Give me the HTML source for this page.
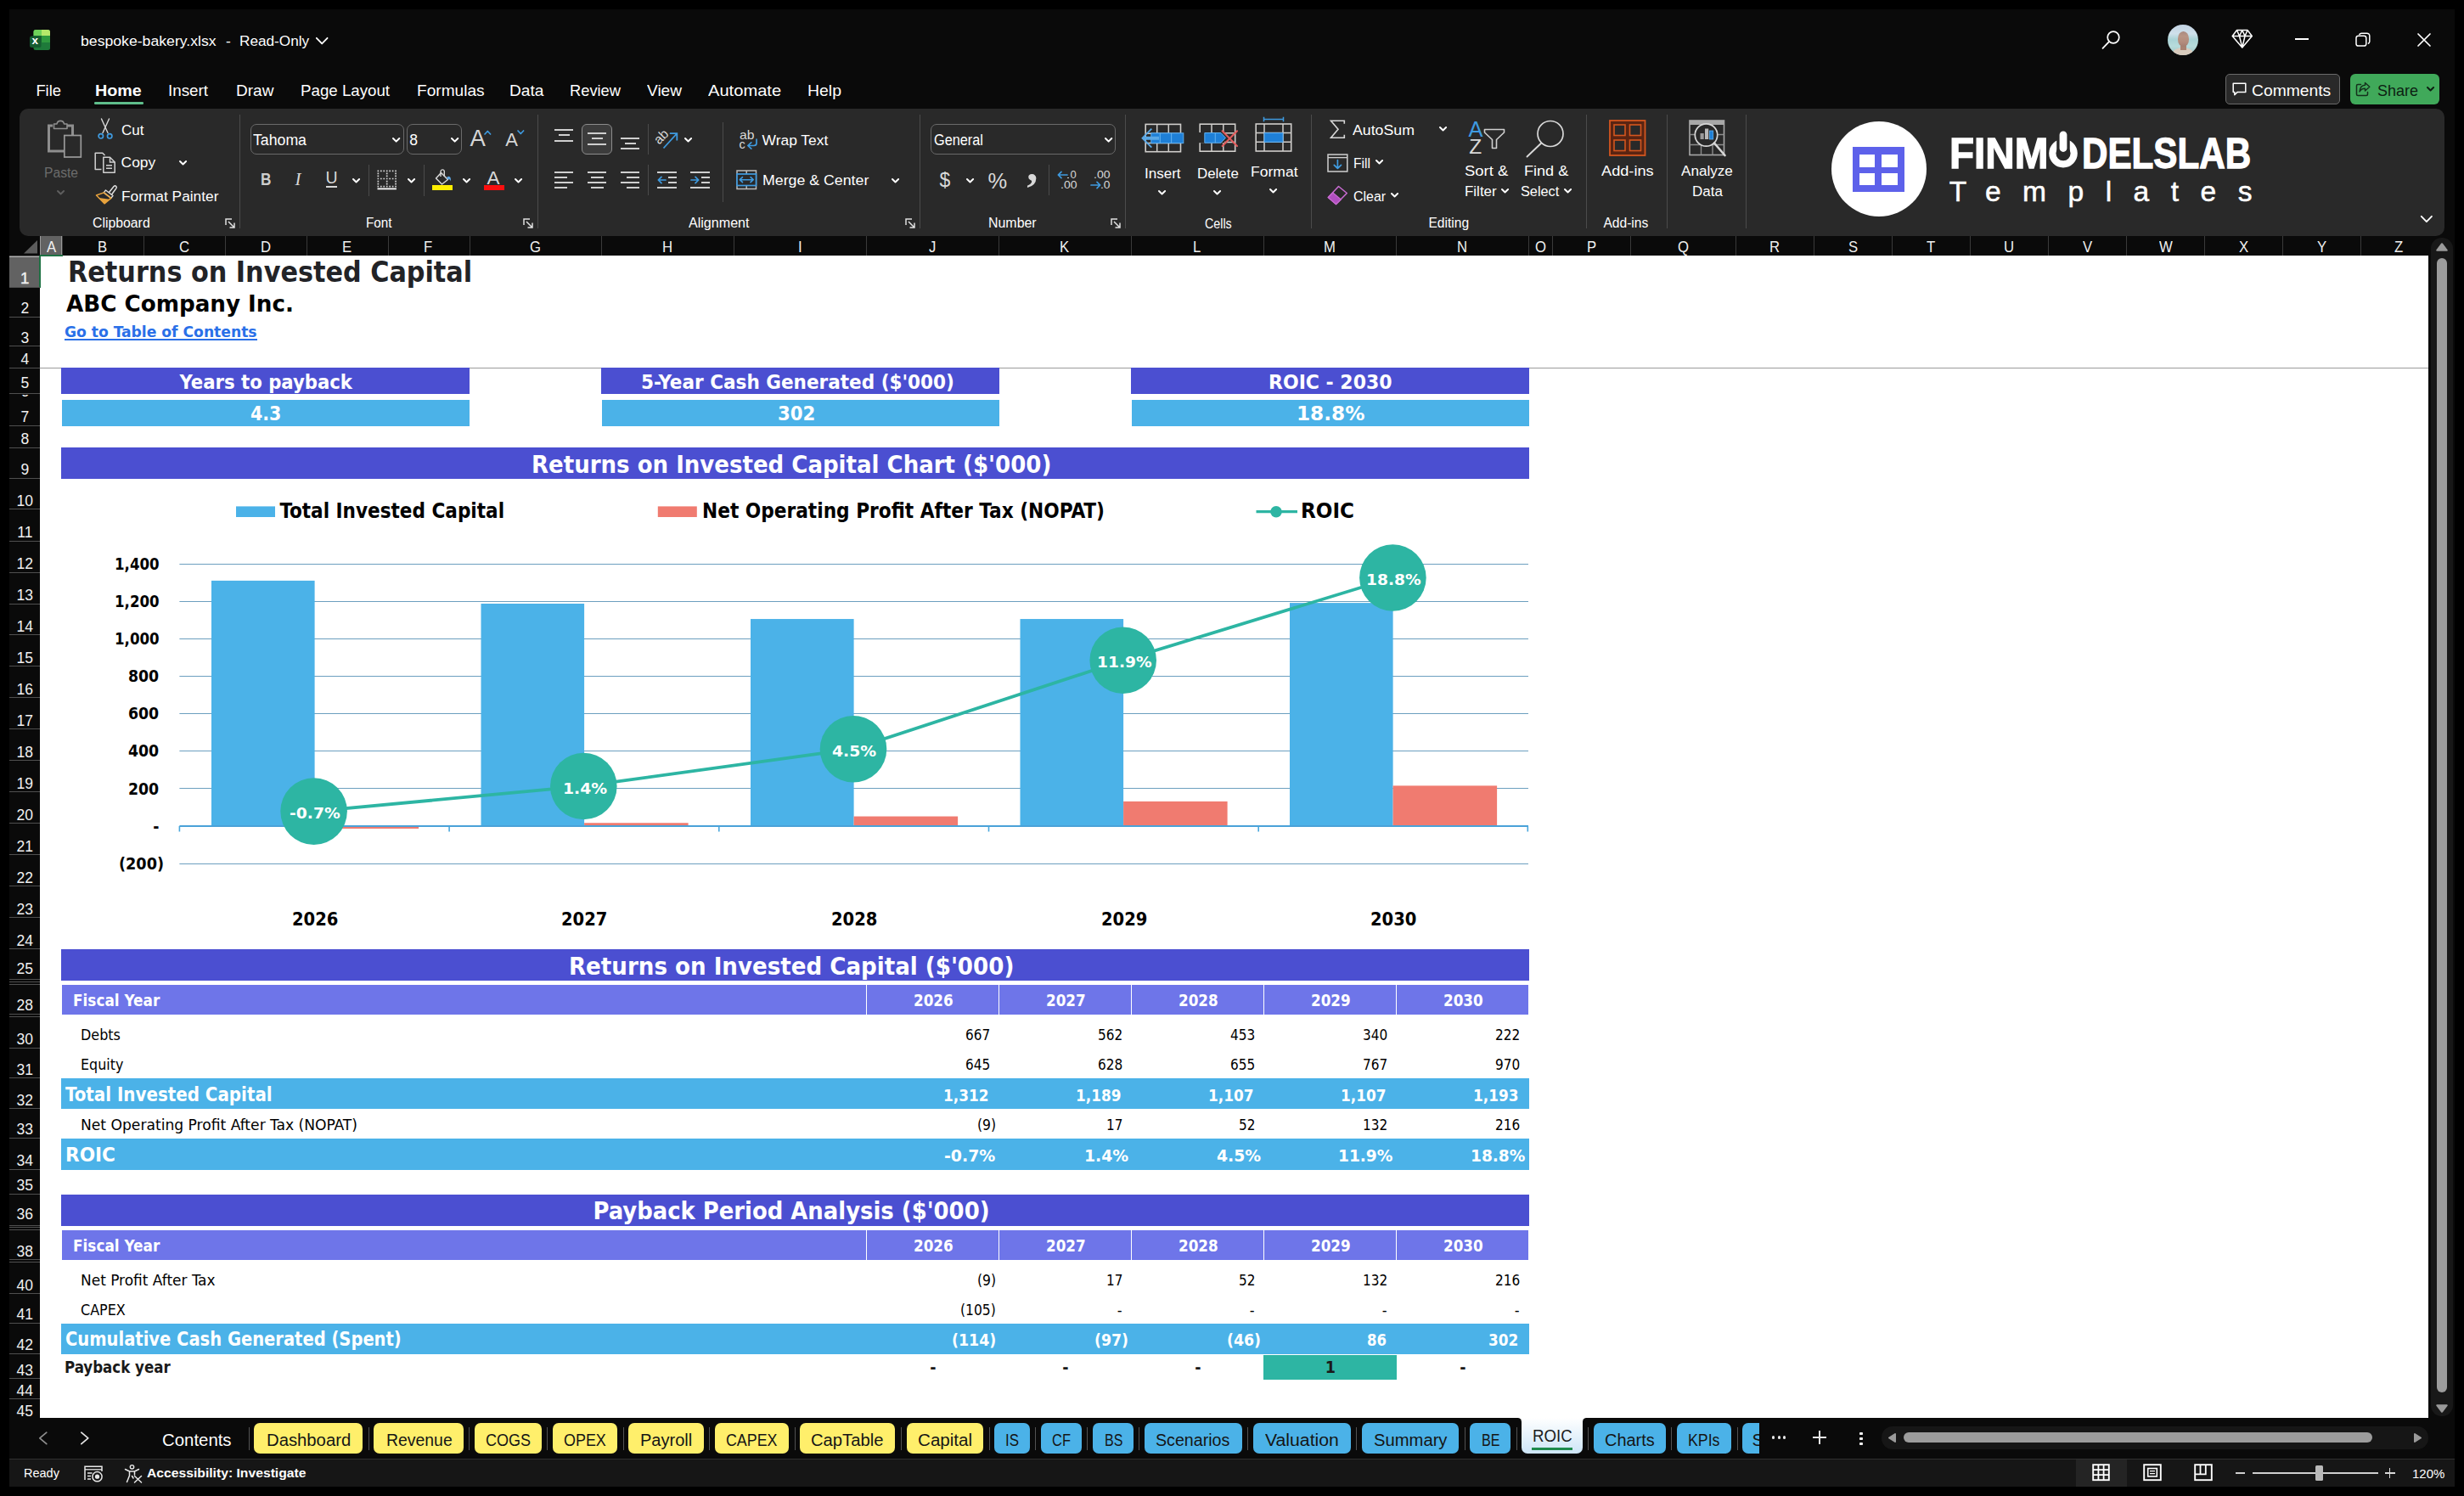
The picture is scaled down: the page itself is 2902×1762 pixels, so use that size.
<!DOCTYPE html>
<html lang="en"><head><meta charset="utf-8"><title>bespoke-bakery.xlsx - Excel</title>
<style>
html,body{margin:0;padding:0}
body{width:2902px;height:1762px;background:#000;position:relative;overflow:hidden;font-family:"Liberation Sans","DejaVu Sans",sans-serif}
#w{position:absolute;left:11px;top:11px;width:2880px;height:1740px;background:#0a0a0a}
div,span,svg{position:absolute}
span{white-space:pre;line-height:1;color:#fff;transform-origin:0 0}
.tu{font-family:"Liberation Sans","DejaVu Sans",sans-serif}
.tt{font-family:"DejaVu Sans Condensed","Liberation Sans",sans-serif}
.ts{font-family:"Liberation Serif","DejaVu Serif",serif}
.b{font-weight:700}
svg{overflow:visible}
</style></head>
<body>
<div id="w"></div>
<svg style="left:34.5px;top:34.5px;" width="24.5" height="24.5" viewBox="0 0 24.5 24.5">
<rect x="4.5" y="0" width="19.5" height="24" rx="2.5" fill="#1e7a3a"/>
<path d="M4.5 2.5A2.5 2.5 0 0 1 7 0H14V7H4.5Z" fill="#6fd15a"/>
<path d="M14 0H21.500A2.500 2.500 0 0 1 24 2.500V7H14Z" fill="#b6e86a"/>
<rect x="14" y="7" width="10" height="8" fill="#2f9a3f"/>
<rect x="4.5" y="7" width="9.5" height="8" fill="#1c6a34"/>
<rect x="0" y="7.600" width="13.500" height="13.500" rx="2.500" fill="#155c30"/>
</svg>
<span class="tu b" style="left:37.6px;top:41px;font-size:13.5px;">x</span>
<span class="tu" style="left:95.4px;top:40px;font-size:17.4px;transform:scaleX(1.015);">bespoke-bakery.xlsx</span>
<span class="tu" style="left:266px;top:40px;font-size:17.4px;">-</span>
<span class="tu" style="left:282.4px;top:40px;font-size:17.4px;transform:scaleX(0.988);">Read-Only</span>
<svg style="left:371.01px;top:43.06px;" width="16.38" height="10.28" viewBox="0 0 16.38 10.28"><path d="M1.8 1.8L8.19 8.48L14.58 1.8" fill="none" stroke="#fff" stroke-width="1.8" stroke-linecap="round" stroke-linejoin="round"/></svg>
<svg style="left:2475px;top:35px;" width="23" height="24" viewBox="0 0 23 24"><circle cx="14" cy="9" r="6.800" fill="none" stroke="#fff" stroke-width="1.700"/><path d="M9.200 13.800L1.500 21.800" stroke="#fff" stroke-width="1.800" stroke-linecap="round"/></svg>
<div style="left:2553px;top:29px;width:36px;height:36px;border-radius:50%;background:linear-gradient(#c3d3e3 0,#cfe0ea 30%,#a9d3d6 48%,#b7dcdc 70%,#9fc4c4 100%);overflow:hidden"><div style="left:6px;top:26.500px;width:24px;height:14px;border-radius:50% 50% 0 0;background:#d8cbbd"></div><div style="left:14.500px;top:22px;width:7px;height:8px;background:#a88372"></div><div style="left:11.500px;top:7.500px;width:13px;height:18px;border-radius:48% 48% 46% 46%;background:linear-gradient(#a98a80 0,#b89585 30%,#b38c7c 70%,#a27e70 100%)"></div></div>
<svg style="left:2628px;top:34px;" width="26" height="24" viewBox="0 0 26 24"><path d="M6.500 1.500H19L24.300 8.500L12.800 22L1.200 8.500Z M1.200 8.500H24.300 M6.500 1.500L9.500 8.500L12.800 22L16 8.500L19 1.500 M9.500 8.500L12.800 1.500L16 8.500" fill="none" stroke="#fff" stroke-width="1.500" stroke-linejoin="round"/></svg>
<div style="left:2703px;top:45.3px;width:15.6px;height:1.8px;background:#fff;"></div>
<svg style="left:2774px;top:38px;" width="18" height="18" viewBox="0 0 18 18"><rect x="1" y="4.200" width="11.800" height="11.800" rx="2.600" fill="none" stroke="#fff" stroke-width="1.500"/><path d="M4.600 3.200A2.600 2.600 0 0 1 7 1.200H13.800A3 3 0 0 1 16.800 4.200V11A2.600 2.600 0 0 1 14.800 13.400" fill="none" stroke="#fff" stroke-width="1.500"/></svg>
<svg style="left:2846px;top:38px;" width="18" height="18" viewBox="0 0 18 18"><path d="M2 2L16 16M16 2L2 16" stroke="#fff" stroke-width="1.700" stroke-linecap="round"/></svg>
<span class="tu" style="left:42.4px;top:98px;font-size:18.4px;">File</span>
<span class="tu b" style="left:111.5px;top:98px;font-size:18.4px;transform:scaleX(1.072);">Home</span>
<span class="tu" style="left:198.4px;top:98px;font-size:18.4px;transform:scaleX(1.022);">Insert</span>
<span class="tu" style="left:277.6px;top:98px;font-size:18.4px;transform:scaleX(1.034);">Draw</span>
<span class="tu" style="left:353.5px;top:98px;font-size:18.4px;transform:scaleX(1.017);">Page Layout</span>
<span class="tu" style="left:491.4px;top:98px;font-size:18.4px;transform:scaleX(1.038);">Formulas</span>
<span class="tu" style="left:600px;top:98px;font-size:18.4px;transform:scaleX(1.040);">Data</span>
<span class="tu" style="left:671px;top:98px;font-size:18.4px;transform:scaleX(0.995);">Review</span>
<span class="tu" style="left:762px;top:98px;font-size:18.4px;transform:scaleX(1.037);">View</span>
<span class="tu" style="left:834.4px;top:98px;font-size:18.4px;transform:scaleX(1.094);">Automate</span>
<span class="tu" style="left:951px;top:98px;font-size:18.4px;transform:scaleX(1.057);">Help</span>
<div style="left:111px;top:120px;width:57.7px;height:2.6px;background:#5ebd8a;border-radius:1.300px;"></div>
<div style="left:2621px;top:87.3px;width:134.6px;height:35.8px;background:#292929;border:1px solid #6a6a6a;border-radius:5px;box-sizing:border-box;"></div>
<svg style="left:2629px;top:96.5px;" width="17" height="17" viewBox="0 0 17 17"><path d="M1.200 1.200H15.800V11.400H6.200L2.800 14.800V11.400H1.200Z" fill="none" stroke="#fff" stroke-width="1.500" stroke-linejoin="round"/></svg>
<span class="tu" style="left:2652.4px;top:98px;font-size:18.4px;transform:scaleX(1.049);">Comments</span>
<div style="left:2768px;top:87.3px;width:105px;height:35.8px;background:#40a95a;border-radius:6px;"></div>
<svg style="left:2774px;top:96px;" width="18" height="18" viewBox="0 0 18 18"><path d="M6.500 3.500H3A1.500 1.500 0 0 0 1.500 5V15A1.500 1.500 0 0 0 3 16.500H13A1.500 1.500 0 0 0 14.500 15V12.500" fill="none" stroke="#14301c" stroke-width="1.500" stroke-linecap="round"/><path d="M11.500 1.500L16.800 6.300L11.500 11V8.200C8 8.200 6.200 9.600 5 12C5.300 7.600 7.600 4.600 11.500 4.300Z" fill="none" stroke="#14301c" stroke-width="1.400" stroke-linejoin="round"/></svg>
<span class="tu" style="left:2799.7px;top:98px;font-size:18.4px;color:#0d1f12;transform:scaleX(0.978);">Share</span>
<svg style="left:2857.05px;top:100.75px;" width="11.1" height="7.5" viewBox="0 0 11.1 7.5"><path d="M2 2L5.55 5.5L9.1 2" fill="none" stroke="#0d1f12" stroke-width="2" stroke-linecap="round" stroke-linejoin="round"/></svg>
<div style="left:47px;top:278px;width:25.6px;height:21.5px;background:#626262;"></div>
<span class="tu" style="left:54.52px;top:281px;font-size:19px;color:#f0f0f0;transform:scaleX(0.880);">A</span>
<div style="left:72.5px;top:278px;width:1px;height:23px;background:#3a3a3a;"></div>
<span class="tu" style="left:115.02px;top:281px;font-size:19px;color:#f0f0f0;transform:scaleX(0.880);">B</span>
<div style="left:168.5px;top:278px;width:1px;height:23px;background:#3a3a3a;"></div>
<span class="tu" style="left:210.56px;top:281px;font-size:19px;color:#f0f0f0;transform:scaleX(0.880);">C</span>
<div style="left:264.5px;top:278px;width:1px;height:23px;background:#3a3a3a;"></div>
<span class="tu" style="left:306.56px;top:281px;font-size:19px;color:#f0f0f0;transform:scaleX(0.880);">D</span>
<div style="left:360.5px;top:278px;width:1px;height:23px;background:#3a3a3a;"></div>
<span class="tu" style="left:403.02px;top:281px;font-size:19px;color:#f0f0f0;transform:scaleX(0.880);">E</span>
<div style="left:456.5px;top:278px;width:1px;height:23px;background:#3a3a3a;"></div>
<span class="tu" style="left:499.49px;top:281px;font-size:19px;color:#f0f0f0;transform:scaleX(0.880);">F</span>
<div style="left:552.5px;top:278px;width:1px;height:23px;background:#3a3a3a;"></div>
<span class="tu" style="left:623.8px;top:281px;font-size:19px;color:#f0f0f0;transform:scaleX(0.880);">G</span>
<div style="left:707.5px;top:278px;width:1px;height:23px;background:#3a3a3a;"></div>
<span class="tu" style="left:779.96px;top:281px;font-size:19px;color:#f0f0f0;transform:scaleX(0.880);">H</span>
<div style="left:863.5px;top:278px;width:1px;height:23px;background:#3a3a3a;"></div>
<span class="tu" style="left:939.68px;top:281px;font-size:19px;color:#f0f0f0;transform:scaleX(0.880);">I</span>
<div style="left:1019.5px;top:278px;width:1px;height:23px;background:#3a3a3a;"></div>
<span class="tu" style="left:1093.82px;top:281px;font-size:19px;color:#f0f0f0;transform:scaleX(0.880);">J</span>
<div style="left:1175.5px;top:278px;width:1px;height:23px;background:#3a3a3a;"></div>
<span class="tu" style="left:1248.42px;top:281px;font-size:19px;color:#f0f0f0;transform:scaleX(0.880);">K</span>
<div style="left:1331.5px;top:278px;width:1px;height:23px;background:#3a3a3a;"></div>
<span class="tu" style="left:1405.35px;top:281px;font-size:19px;color:#f0f0f0;transform:scaleX(0.880);">L</span>
<div style="left:1487.5px;top:278px;width:1px;height:23px;background:#3a3a3a;"></div>
<span class="tu" style="left:1559.04px;top:281px;font-size:19px;color:#f0f0f0;transform:scaleX(0.880);">M</span>
<div style="left:1643.5px;top:278px;width:1px;height:23px;background:#3a3a3a;"></div>
<span class="tu" style="left:1715.96px;top:281px;font-size:19px;color:#f0f0f0;transform:scaleX(0.880);">N</span>
<div style="left:1799.5px;top:278px;width:1px;height:23px;background:#3a3a3a;"></div>
<span class="tu" style="left:1807.75px;top:281px;font-size:19px;color:#f0f0f0;transform:scaleX(0.880);">O</span>
<div style="left:1827.5px;top:278px;width:1px;height:23px;background:#3a3a3a;"></div>
<span class="tu" style="left:1868.92px;top:281px;font-size:19px;color:#f0f0f0;transform:scaleX(0.880);">P</span>
<div style="left:1919.5px;top:278px;width:1px;height:23px;background:#3a3a3a;"></div>
<span class="tu" style="left:1976px;top:281px;font-size:19px;color:#f0f0f0;transform:scaleX(0.880);">Q</span>
<div style="left:2043.5px;top:278px;width:1px;height:23px;background:#3a3a3a;"></div>
<span class="tu" style="left:2084.46px;top:281px;font-size:19px;color:#f0f0f0;transform:scaleX(0.880);">R</span>
<div style="left:2135.5px;top:278px;width:1px;height:23px;background:#3a3a3a;"></div>
<span class="tu" style="left:2176.92px;top:281px;font-size:19px;color:#f0f0f0;transform:scaleX(0.880);">S</span>
<div style="left:2227.5px;top:278px;width:1px;height:23px;background:#3a3a3a;"></div>
<span class="tu" style="left:2269.39px;top:281px;font-size:19px;color:#f0f0f0;transform:scaleX(0.880);">T</span>
<div style="left:2319.5px;top:278px;width:1px;height:23px;background:#3a3a3a;"></div>
<span class="tu" style="left:2360.46px;top:281px;font-size:19px;color:#f0f0f0;transform:scaleX(0.880);">U</span>
<div style="left:2411.5px;top:278px;width:1px;height:23px;background:#3a3a3a;"></div>
<span class="tu" style="left:2452.92px;top:281px;font-size:19px;color:#f0f0f0;transform:scaleX(0.880);">V</span>
<div style="left:2503.5px;top:278px;width:1px;height:23px;background:#3a3a3a;"></div>
<span class="tu" style="left:2542.61px;top:281px;font-size:19px;color:#f0f0f0;transform:scaleX(0.880);">W</span>
<div style="left:2595.5px;top:278px;width:1px;height:23px;background:#3a3a3a;"></div>
<span class="tu" style="left:2636.92px;top:281px;font-size:19px;color:#f0f0f0;transform:scaleX(0.880);">X</span>
<div style="left:2687.5px;top:278px;width:1px;height:23px;background:#3a3a3a;"></div>
<span class="tu" style="left:2728.92px;top:281px;font-size:19px;color:#f0f0f0;transform:scaleX(0.880);">Y</span>
<div style="left:2779.5px;top:278px;width:1px;height:23px;background:#3a3a3a;"></div>
<span class="tu" style="left:2819.89px;top:281px;font-size:19px;color:#f0f0f0;transform:scaleX(0.880);">Z</span>
<svg style="left:28px;top:283px;" width="16" height="15.5" viewBox="0 0 16 15.5"><path d="M16 0V15.500H0Z" fill="#5c5c5c"/></svg>
<div style="left:47px;top:301px;width:2813.3px;height:1369.2px;background:#fff;"></div>
<div style="left:47px;top:300px;width:27px;height:2px;background:#1f7244;"></div>
<div style="left:47px;top:278px;width:1px;height:22px;background:#9a9a9a;"></div>
<div style="left:72px;top:278px;width:1px;height:22px;background:#9a9a9a;"></div>
<div style="left:11px;top:301px;width:36px;height:37.5px;background:#626262;"></div>
<div style="left:46px;top:301px;width:2px;height:38px;background:#1f7244;"></div>
<div style="left:11px;top:301.5px;width:35px;height:1px;background:#b4b4b4;"></div>
<div style="left:11px;top:338px;width:35px;height:1px;background:#b4b4b4;"></div>
<span class="tu rh" style="left:24.07px;top:319px;font-size:18.8px;color:#f0f0f0;-webkit-text-stroke:0.400px #f0f0f0;">1</span>
<div style="left:11px;top:338px;width:36px;height:1px;background:#4f4f4f;"></div>
<span class="tu rh" style="left:24.43px;top:355px;font-size:17.5px;color:#f0f0f0;">2</span>
<div style="left:11px;top:373px;width:36px;height:1px;background:#4f4f4f;"></div>
<span class="tu rh" style="left:24.43px;top:390px;font-size:17.5px;color:#f0f0f0;">3</span>
<div style="left:11px;top:407px;width:36px;height:1px;background:#4f4f4f;"></div>
<span class="tu rh" style="left:24.43px;top:415px;font-size:17.5px;color:#f0f0f0;">4</span>
<div style="left:11px;top:433px;width:36px;height:1px;background:#4f4f4f;"></div>
<span class="tu rh" style="left:24.43px;top:443px;font-size:17.5px;color:#f0f0f0;">5</span>
<div style="left:11px;top:463px;width:36px;height:1px;background:#4f4f4f;"></div>
<span class="tu rh" style="left:24.43px;top:483px;font-size:17.5px;color:#f0f0f0;">7</span>
<div style="left:11px;top:501px;width:36px;height:1px;background:#4f4f4f;"></div>
<span class="tu rh" style="left:24.43px;top:509px;font-size:17.5px;color:#f0f0f0;">8</span>
<div style="left:11px;top:527px;width:36px;height:1px;background:#4f4f4f;"></div>
<span class="tu rh" style="left:24.43px;top:545px;font-size:17.5px;color:#f0f0f0;">9</span>
<div style="left:11px;top:563px;width:36px;height:1px;background:#4f4f4f;"></div>
<span class="tu rh" style="left:19.57px;top:582px;font-size:17.5px;color:#f0f0f0;">10</span>
<div style="left:11px;top:599px;width:36px;height:1px;background:#4f4f4f;"></div>
<span class="tu rh" style="left:20.21px;top:619px;font-size:17.5px;color:#f0f0f0;">11</span>
<div style="left:11px;top:637px;width:36px;height:1px;background:#4f4f4f;"></div>
<span class="tu rh" style="left:19.57px;top:656px;font-size:17.5px;color:#f0f0f0;">12</span>
<div style="left:11px;top:674px;width:36px;height:1px;background:#4f4f4f;"></div>
<span class="tu rh" style="left:19.57px;top:693px;font-size:17.5px;color:#f0f0f0;">13</span>
<div style="left:11px;top:711px;width:36px;height:1px;background:#4f4f4f;"></div>
<span class="tu rh" style="left:19.57px;top:730px;font-size:17.5px;color:#f0f0f0;">14</span>
<div style="left:11px;top:747px;width:36px;height:1px;background:#4f4f4f;"></div>
<span class="tu rh" style="left:19.57px;top:767px;font-size:17.5px;color:#f0f0f0;">15</span>
<div style="left:11px;top:784px;width:36px;height:1px;background:#4f4f4f;"></div>
<span class="tu rh" style="left:19.57px;top:804px;font-size:17.5px;color:#f0f0f0;">16</span>
<div style="left:11px;top:821px;width:36px;height:1px;background:#4f4f4f;"></div>
<span class="tu rh" style="left:19.57px;top:841px;font-size:17.5px;color:#f0f0f0;">17</span>
<div style="left:11px;top:858px;width:36px;height:1px;background:#4f4f4f;"></div>
<span class="tu rh" style="left:19.57px;top:878px;font-size:17.5px;color:#f0f0f0;">18</span>
<div style="left:11px;top:895px;width:36px;height:1px;background:#4f4f4f;"></div>
<span class="tu rh" style="left:19.57px;top:915px;font-size:17.5px;color:#f0f0f0;">19</span>
<div style="left:11px;top:932px;width:36px;height:1px;background:#4f4f4f;"></div>
<span class="tu rh" style="left:19.57px;top:952px;font-size:17.5px;color:#f0f0f0;">20</span>
<div style="left:11px;top:969px;width:36px;height:1px;background:#4f4f4f;"></div>
<span class="tu rh" style="left:19.57px;top:989px;font-size:17.5px;color:#f0f0f0;">21</span>
<div style="left:11px;top:1006px;width:36px;height:1px;background:#4f4f4f;"></div>
<span class="tu rh" style="left:19.57px;top:1026px;font-size:17.5px;color:#f0f0f0;">22</span>
<div style="left:11px;top:1043px;width:36px;height:1px;background:#4f4f4f;"></div>
<span class="tu rh" style="left:19.57px;top:1063px;font-size:17.5px;color:#f0f0f0;">23</span>
<div style="left:11px;top:1080px;width:36px;height:1px;background:#4f4f4f;"></div>
<span class="tu rh" style="left:19.57px;top:1100px;font-size:17.5px;color:#f0f0f0;">24</span>
<div style="left:11px;top:1117px;width:36px;height:1px;background:#4f4f4f;"></div>
<span class="tu rh" style="left:19.57px;top:1133px;font-size:17.5px;color:#f0f0f0;">25</span>
<div style="left:11px;top:1153px;width:36px;height:1px;background:#4f4f4f;"></div>
<span class="tu rh" style="left:19.57px;top:1176px;font-size:17.5px;color:#f0f0f0;">28</span>
<div style="left:11px;top:1194px;width:36px;height:1px;background:#4f4f4f;"></div>
<span class="tu rh" style="left:19.57px;top:1216px;font-size:17.5px;color:#f0f0f0;">30</span>
<div style="left:11px;top:1234px;width:36px;height:1px;background:#4f4f4f;"></div>
<span class="tu rh" style="left:19.57px;top:1252px;font-size:17.5px;color:#f0f0f0;">31</span>
<div style="left:11px;top:1269px;width:36px;height:1px;background:#4f4f4f;"></div>
<span class="tu rh" style="left:19.57px;top:1288px;font-size:17.5px;color:#f0f0f0;">32</span>
<div style="left:11px;top:1305px;width:36px;height:1px;background:#4f4f4f;"></div>
<span class="tu rh" style="left:19.57px;top:1322px;font-size:17.5px;color:#f0f0f0;">33</span>
<div style="left:11px;top:1340px;width:36px;height:1px;background:#4f4f4f;"></div>
<span class="tu rh" style="left:19.57px;top:1359px;font-size:17.5px;color:#f0f0f0;">34</span>
<div style="left:11px;top:1377px;width:36px;height:1px;background:#4f4f4f;"></div>
<span class="tu rh" style="left:19.57px;top:1388px;font-size:17.5px;color:#f0f0f0;">35</span>
<div style="left:11px;top:1406px;width:36px;height:1px;background:#4f4f4f;"></div>
<span class="tu rh" style="left:19.57px;top:1422px;font-size:17.5px;color:#f0f0f0;">36</span>
<div style="left:11px;top:1443px;width:36px;height:1px;background:#4f4f4f;"></div>
<span class="tu rh" style="left:19.57px;top:1466px;font-size:17.5px;color:#f0f0f0;">38</span>
<div style="left:11px;top:1483px;width:36px;height:1px;background:#4f4f4f;"></div>
<span class="tu rh" style="left:19.57px;top:1506px;font-size:17.5px;color:#f0f0f0;">40</span>
<div style="left:11px;top:1523px;width:36px;height:1px;background:#4f4f4f;"></div>
<span class="tu rh" style="left:19.57px;top:1540px;font-size:17.5px;color:#f0f0f0;">41</span>
<div style="left:11px;top:1558px;width:36px;height:1px;background:#4f4f4f;"></div>
<span class="tu rh" style="left:19.57px;top:1576px;font-size:17.5px;color:#f0f0f0;">42</span>
<div style="left:11px;top:1594px;width:36px;height:1px;background:#4f4f4f;"></div>
<span class="tu rh" style="left:19.57px;top:1606px;font-size:17.5px;color:#f0f0f0;">43</span>
<div style="left:11px;top:1623px;width:36px;height:1px;background:#4f4f4f;"></div>
<span class="tu rh" style="left:19.57px;top:1630px;font-size:17.5px;color:#f0f0f0;">44</span>
<div style="left:11px;top:1647px;width:36px;height:1px;background:#4f4f4f;"></div>
<span class="tu rh" style="left:19.57px;top:1654px;font-size:17.5px;color:#f0f0f0;">45</span>
<div style="left:13px;top:464.500px;width:34px;height:4px;overflow:hidden"><span class="tu" style="left:11.400px;top:-11.500px;font-size:17.500px;color:#f0f0f0">6</span></div>
<div style="left:11px;top:463px;width:36px;height:1px;background:#4f4f4f;"></div>
<div style="left:11px;top:1156px;width:36px;height:1px;background:#4f4f4f;"></div>
<div style="left:11px;top:1159px;width:36px;height:1px;background:#4f4f4f;"></div>
<div style="left:11px;top:1197px;width:36px;height:1px;background:#4f4f4f;"></div>
<div style="left:11px;top:1445px;width:36px;height:1px;background:#4f4f4f;"></div>
<div style="left:11px;top:1448px;width:36px;height:1px;background:#4f4f4f;"></div>
<div style="left:11px;top:1486px;width:36px;height:1px;background:#4f4f4f;"></div>
<div style="left:11px;top:1670.2px;width:2880px;height:80.8px;background:#0a0a0a;"></div>
<div style="left:2860.3px;top:278px;width:30.7px;height:1392.2px;background:#0a0a0a;"></div>
<div style="left:2863px;top:279.5px;width:25.5px;height:1388px;background:#181818;border-radius:12.700px;"></div>
<svg style="left:2869.1px;top:286px;" width="14" height="10" viewBox="0 0 14 10"><path d="M7 1.200L12.800 8.800H1.200Z" fill="#9a9a9a" stroke="#9a9a9a" stroke-linejoin="round" stroke-width="2"/></svg>
<div style="left:2870px;top:304px;width:11.5px;height:1336px;background:#9c9c9c;border-radius:6px;"></div>
<svg style="left:2869.1px;top:1654.2px;" width="14" height="10" viewBox="0 0 14 10"><path d="M7 8.800L12.800 1.200H1.200Z" fill="#9a9a9a" stroke="#9a9a9a" stroke-linejoin="round" stroke-width="2"/></svg>
<div style="left:23px;top:128px;width:2856px;height:150px;background:#292929;border-radius:10px;"></div>
<div style="left:281.9px;top:134.7px;width:1.2px;height:134px;background:#4b4b4b;"></div>
<div style="left:632.9px;top:134.7px;width:1.2px;height:134px;background:#4b4b4b;"></div>
<div style="left:1083px;top:134.7px;width:1.2px;height:134px;background:#4b4b4b;"></div>
<div style="left:1324.9px;top:134.7px;width:1.2px;height:134px;background:#4b4b4b;"></div>
<div style="left:1543.6px;top:134.7px;width:1.2px;height:134px;background:#4b4b4b;"></div>
<div style="left:1867.8px;top:134.7px;width:1.2px;height:134px;background:#4b4b4b;"></div>
<div style="left:1962.7px;top:134.7px;width:1.2px;height:134px;background:#4b4b4b;"></div>
<div style="left:2055.7px;top:134.7px;width:1.2px;height:134px;background:#4b4b4b;"></div>
<svg style="left:54px;top:140px;" width="44" height="48" viewBox="0 0 44 48">
<path d="M8 8H3.500V38H21" fill="none" stroke="#8e8e8e" stroke-width="3"/>
<path d="M25 8H31.500V19" fill="none" stroke="#8e8e8e" stroke-width="3"/>
<path d="M9.500 11.500V6H13A4.300 4.300 0 0 1 21.500 6H25V11.500Z" fill="#292929" stroke="#8e8e8e" stroke-width="1.600" stroke-linejoin="round"/>
<rect x="21.800" y="19.500" width="19.500" height="25.500" fill="#292929" stroke="#9a9a9a" stroke-width="1.700"/>
</svg>
<span class="tu" style="left:52px;top:195px;font-size:17.3px;color:#6c6c6c;transform:scaleX(0.905);">Paste</span>
<svg style="left:65.95px;top:222.75px;" width="11.1" height="7.5" viewBox="0 0 11.1 7.5"><path d="M2 2L5.55 5.5L9.1 2" fill="none" stroke="#5e5e5e" stroke-width="2" stroke-linecap="round" stroke-linejoin="round"/></svg>
<svg style="left:114px;top:139px;" width="20" height="27" viewBox="0 0 20 27">
<path d="M5.500 1L13 17.500M14.500 1L7 17.500" stroke="#d8d8d8" stroke-width="1.400" stroke-linecap="round" fill="none"/>
<circle cx="4.800" cy="21.300" r="2.700" fill="none" stroke="#3f9be0" stroke-width="1.700"/>
<circle cx="15.200" cy="21.300" r="2.700" fill="none" stroke="#3f9be0" stroke-width="1.700"/>
</svg>
<span class="tu" style="left:142.6px;top:145px;font-size:17.4px;transform:scaleX(0.976);">Cut</span>
<svg style="left:111px;top:178.5px;" width="26" height="26" viewBox="0 0 26 26">
<path d="M8.500 20.500H1.200V1.200H9.800L12.500 4" fill="none" stroke="#d0d0d0" stroke-width="1.500" stroke-linejoin="round"/>
<path d="M10.800 6.200H18.500L24.200 12V24.200H10.800Z" fill="none" stroke="#d0d0d0" stroke-width="1.500" stroke-linejoin="round"/>
<path d="M18.500 6.200V12H24.200" fill="none" stroke="#d0d0d0" stroke-width="1.400"/>
<path d="M14 15.800H21M14 19.300H21" stroke="#d0d0d0" stroke-width="1.400"/>
</svg>
<span class="tu" style="left:142.6px;top:183px;font-size:17.4px;">Copy</span>
<svg style="left:209.75px;top:187.85px;" width="11.1" height="7.5" viewBox="0 0 11.1 7.5"><path d="M2 2L5.55 5.5L9.1 2" fill="none" stroke="#fff" stroke-width="2" stroke-linecap="round" stroke-linejoin="round"/></svg>
<svg style="left:111.5px;top:217px;" width="26" height="25" viewBox="0 0 26 25">
<path d="M16.500 9.500L22.300 2.300A1.800 1.800 0 0 1 25 4.600L19.600 12" fill="none" stroke="#e0e0e0" stroke-width="1.500" stroke-linejoin="round"/>
<path d="M12.500 7L21 13.500L18.800 16.400L10.300 9.900Z" fill="none" stroke="#e0e0e0" stroke-width="1.400" stroke-linejoin="round"/>
<path d="M10.300 9.900L1.500 13L11 22.800L18.800 16.400Z" fill="none" stroke="#e8a33d" stroke-width="1.500" stroke-linejoin="round"/>
<path d="M4.500 16L11 22.800L17 17.800Z" fill="#e8a33d"/>
</svg>
<span class="tu" style="left:142.9px;top:223px;font-size:17.4px;transform:scaleX(0.995);">Format Painter</span>
<span class="tu" style="left:109.3px;top:255px;font-size:15.6px;transform:scaleX(1.014);">Clipboard</span>
<svg style="left:265px;top:257.3px;" width="12" height="12" viewBox="0 0 12 12"><path d="M1 8V1H8" fill="none" stroke="#e0e0e0" stroke-width="1.500"/><path d="M4 4L10.500 10.500M5.500 11H11V5.500" fill="none" stroke="#e0e0e0" stroke-width="1.500"/></svg>
<div style="left:295px;top:146px;width:180.6px;height:35.8px;border:1.300px solid #6a6a6a;border-radius:7px;box-sizing:border-box;"></div>
<span class="tu" style="left:298.4px;top:157px;font-size:17.6px;transform:scaleX(1.006);">Tahoma</span>
<svg style="left:461.45px;top:160.8px;" width="11.3" height="7.6" viewBox="0 0 11.3 7.6"><path d="M2 2L5.65 5.6L9.3 2" fill="none" stroke="#fff" stroke-width="2" stroke-linecap="round" stroke-linejoin="round"/></svg>
<div style="left:479.4px;top:146px;width:64.4px;height:35.8px;border:1.300px solid #6a6a6a;border-radius:7px;box-sizing:border-box;"></div>
<span class="tu" style="left:482.3px;top:157px;font-size:17.6px;">8</span>
<svg style="left:529.55px;top:160.8px;" width="11.3" height="7.6" viewBox="0 0 11.3 7.6"><path d="M2 2L5.65 5.6L9.3 2" fill="none" stroke="#fff" stroke-width="2" stroke-linecap="round" stroke-linejoin="round"/></svg>
<span class="tu" style="left:553.5px;top:149px;font-size:27.5px;color:#d6d6d6;">A</span>
<svg style="left:570px;top:152.5px;" width="9" height="6" viewBox="0 0 9 6"><path d="M1 5L4.300 1.500L7.600 5" fill="none" stroke="#3f9be0" stroke-width="1.700" stroke-linecap="round" stroke-linejoin="round"/></svg>
<span class="tu" style="left:595.2px;top:154px;font-size:22px;color:#d6d6d6;">A</span>
<svg style="left:608.5px;top:153px;" width="9" height="6" viewBox="0 0 9 6"><path d="M1 1L4.300 4.500L7.600 1" fill="none" stroke="#3f9be0" stroke-width="1.700" stroke-linecap="round" stroke-linejoin="round"/></svg>
<span class="tu b" style="left:307px;top:201px;font-size:20.5px;color:#cdcdcd;transform:scaleX(0.840);">B</span>
<span class="ts" style="left:347.5px;top:201px;font-size:21px;color:#d8d8d8;font-style:italic;">I</span>
<span class="tu" style="left:383.4px;top:200px;font-size:19.5px;color:#d8d8d8;">U</span>
<div style="left:383.6px;top:219.2px;width:13.2px;height:1.5px;background:#d8d8d8;"></div>
<svg style="left:413.65px;top:208.85px;" width="11.1" height="7.5" viewBox="0 0 11.1 7.5"><path d="M2 2L5.55 5.5L9.1 2" fill="none" stroke="#fff" stroke-width="2" stroke-linecap="round" stroke-linejoin="round"/></svg>
<div style="left:433.6px;top:194px;width:1.2px;height:36.5px;background:#4b4b4b;"></div>
<svg style="left:444px;top:199.5px;" width="24" height="24" viewBox="0 0 24 24"><path d="M0.5 0.5h1.700v1.700h-1.700zM0.5 3.55h1.700v1.700h-1.700zM0.5 6.6h1.700v1.700h-1.700zM0.5 9.65h1.700v1.700h-1.700zM0.5 12.7h1.700v1.700h-1.700zM0.5 15.75h1.700v1.700h-1.700zM0.5 18.8h1.700v1.700h-1.700zM3.95 0.5h1.700v1.700h-1.700zM3.95 9.65h1.700v1.700h-1.700zM3.95 18.8h1.700v1.700h-1.700zM7.4 0.5h1.700v1.700h-1.700zM7.4 9.65h1.700v1.700h-1.700zM7.4 18.8h1.700v1.700h-1.700zM10.85 0.5h1.700v1.700h-1.700zM10.85 3.55h1.700v1.700h-1.700zM10.85 6.6h1.700v1.700h-1.700zM10.85 9.65h1.700v1.700h-1.700zM10.85 12.7h1.700v1.700h-1.700zM10.85 15.75h1.700v1.700h-1.700zM10.85 18.8h1.700v1.700h-1.700zM14.3 0.5h1.700v1.700h-1.700zM14.3 9.65h1.700v1.700h-1.700zM14.3 18.8h1.700v1.700h-1.700zM17.75 0.5h1.700v1.700h-1.700zM17.75 9.65h1.700v1.700h-1.700zM17.75 18.8h1.700v1.700h-1.700zM21.2 0.5h1.700v1.700h-1.700zM21.2 3.55h1.700v1.700h-1.700zM21.2 6.6h1.700v1.700h-1.700zM21.2 9.65h1.700v1.700h-1.700zM21.2 12.7h1.700v1.700h-1.700zM21.2 15.75h1.700v1.700h-1.700zM21.2 18.8h1.700v1.700h-1.700z" fill="#d4d4d4"/><path d="M0.500 22.400H22.900" stroke="#ffffff" stroke-width="1.800"/></svg>
<svg style="left:478.95px;top:208.85px;" width="11.1" height="7.5" viewBox="0 0 11.1 7.5"><path d="M2 2L5.55 5.5L9.1 2" fill="none" stroke="#fff" stroke-width="2" stroke-linecap="round" stroke-linejoin="round"/></svg>
<div style="left:498.9px;top:194px;width:1.2px;height:36.5px;background:#4b4b4b;"></div>
<svg style="left:511px;top:199px;" width="22" height="20" viewBox="0 0 22 20">
<path d="M8.500 4.500L16.500 12.500L9.500 18L2.500 11Z" fill="none" stroke="#d8d8d8" stroke-width="1.500" stroke-linejoin="round"/>
<path d="M8 9V2.800A2.200 2.200 0 0 1 12.300 2.500V8.500" fill="none" stroke="#d8d8d8" stroke-width="1.400"/>
<path d="M15.500 9.500C18.500 7.500 20.500 9.500 19.800 14.500C18.700 12 17.500 11.500 15.500 12.500Z" fill="#5fa8e6"/>
</svg>
<div style="left:509px;top:217.9px;width:24px;height:6.2px;background:#ffee00;"></div>
<svg style="left:543.95px;top:208.85px;" width="11.1" height="7.5" viewBox="0 0 11.1 7.5"><path d="M2 2L5.55 5.5L9.1 2" fill="none" stroke="#fff" stroke-width="2" stroke-linecap="round" stroke-linejoin="round"/></svg>
<span class="tu" style="left:573.6px;top:199px;font-size:22.5px;color:#d8d8d8;">A</span>
<div style="left:569.8px;top:217.9px;width:24.2px;height:6.2px;background:#fa0f0f;"></div>
<svg style="left:604.95px;top:208.85px;" width="11.1" height="7.5" viewBox="0 0 11.1 7.5"><path d="M2 2L5.55 5.5L9.1 2" fill="none" stroke="#fff" stroke-width="2" stroke-linecap="round" stroke-linejoin="round"/></svg>
<span class="tu" style="left:430.5px;top:255px;font-size:15.6px;transform:scaleX(0.977);">Font</span>
<svg style="left:616px;top:257.3px;" width="12" height="12" viewBox="0 0 12 12"><path d="M1 8V1H8" fill="none" stroke="#e0e0e0" stroke-width="1.500"/><path d="M4 4L10.500 10.500M5.500 11H11V5.500" fill="none" stroke="#e0e0e0" stroke-width="1.500"/></svg>
<div style="left:653px;top:152px;width:22px;height:1.5px;background:#cfcfcf;"></div>
<div style="left:658px;top:158px;width:12.5px;height:1.5px;background:#cfcfcf;"></div>
<div style="left:653px;top:165px;width:22px;height:1.5px;background:#cfcfcf;"></div>
<div style="left:685px;top:146px;width:35.7px;height:36px;background:#3c3c3c;border:1.200px solid #8c8c8c;border-radius:6px;box-sizing:border-box;"></div>
<div style="left:692px;top:156px;width:22px;height:1.5px;background:#cfcfcf;"></div>
<div style="left:697px;top:162px;width:12.5px;height:1.5px;background:#cfcfcf;"></div>
<div style="left:692px;top:169px;width:22px;height:1.5px;background:#cfcfcf;"></div>
<div style="left:731px;top:162px;width:22px;height:1.5px;background:#cfcfcf;"></div>
<div style="left:736px;top:168px;width:12.5px;height:1.5px;background:#cfcfcf;"></div>
<div style="left:731px;top:174px;width:22px;height:1.5px;background:#cfcfcf;"></div>
<div style="left:763px;top:146px;width:1.2px;height:36px;background:#4b4b4b;"></div>
<div style="left:763px;top:193.6px;width:1.2px;height:36.4px;background:#4b4b4b;"></div>
<svg style="left:772px;top:151px;" width="27" height="25" viewBox="0 0 27 25">
<path d="M9.500 23.500L25 6.500M16.800 6.200H25.300V14.500" fill="none" stroke="#3f9be0" stroke-width="1.800" stroke-linejoin="miter"/>
</svg>
<span class="tu" style="left:778px;top:157px;font-size:15.5px;color:#d8d8d8;transform:rotate(-45deg);transform-origin:0 100%;">ab</span>
<svg style="left:804.85px;top:160.85px;" width="11.1" height="7.5" viewBox="0 0 11.1 7.5"><path d="M2 2L5.55 5.5L9.1 2" fill="none" stroke="#fff" stroke-width="2" stroke-linecap="round" stroke-linejoin="round"/></svg>
<div style="left:653px;top:202px;width:22px;height:1.5px;background:#cfcfcf;"></div>
<div style="left:653px;top:208px;width:15px;height:1.5px;background:#cfcfcf;"></div>
<div style="left:653px;top:214px;width:22px;height:1.5px;background:#cfcfcf;"></div>
<div style="left:653px;top:220px;width:15px;height:1.5px;background:#cfcfcf;"></div>
<div style="left:692px;top:202px;width:22px;height:1.5px;background:#cfcfcf;"></div>
<div style="left:695.5px;top:208px;width:15px;height:1.5px;background:#cfcfcf;"></div>
<div style="left:692px;top:214px;width:22px;height:1.5px;background:#cfcfcf;"></div>
<div style="left:695.5px;top:220px;width:15px;height:1.5px;background:#cfcfcf;"></div>
<div style="left:731px;top:202px;width:22px;height:1.5px;background:#cfcfcf;"></div>
<div style="left:738px;top:208px;width:15px;height:1.5px;background:#cfcfcf;"></div>
<div style="left:731px;top:214px;width:22px;height:1.5px;background:#cfcfcf;"></div>
<div style="left:738px;top:220px;width:15px;height:1.5px;background:#cfcfcf;"></div>
<div style="left:774px;top:202px;width:22.5px;height:1.5px;background:#cfcfcf;"></div>
<div style="left:774px;top:220px;width:22.5px;height:1.5px;background:#cfcfcf;"></div>
<div style="left:786.5px;top:208px;width:10px;height:1.5px;background:#cfcfcf;"></div>
<div style="left:786.5px;top:214px;width:10px;height:1.5px;background:#cfcfcf;"></div>
<svg style="left:774px;top:206.5px;" width="11" height="10" viewBox="0 0 11 10"><path d="M10 5H1.500M5 1.300L1.300 5L5 8.700" fill="none" stroke="#3f9be0" stroke-width="1.700" stroke-linejoin="round" stroke-linecap="round"/></svg>
<div style="left:813px;top:202px;width:22.5px;height:1.5px;background:#cfcfcf;"></div>
<div style="left:813px;top:220px;width:22.5px;height:1.5px;background:#cfcfcf;"></div>
<div style="left:825.5px;top:208px;width:10px;height:1.5px;background:#cfcfcf;"></div>
<div style="left:825.5px;top:214px;width:10px;height:1.5px;background:#cfcfcf;"></div>
<svg style="left:813px;top:206.5px;" width="11" height="10" viewBox="0 0 11 10"><path d="M1 5H9.500M6 1.300L9.700 5L6 8.700" fill="none" stroke="#3f9be0" stroke-width="1.700" stroke-linejoin="round" stroke-linecap="round"/></svg>
<div style="left:850.8px;top:144px;width:1.2px;height:93.6px;background:#4b4b4b;"></div>
<span class="tu" style="left:870.5px;top:152px;font-size:14.5px;color:#d8d8d8;transform:scaleX(1.084);">ab</span>
<span class="tu" style="left:870.5px;top:163px;font-size:14.5px;color:#d8d8d8;">c</span>
<svg style="left:878.5px;top:163px;" width="14" height="14" viewBox="0 0 14 14"><path d="M12 1V5.500A3 3 0 0 1 9 8.500H2M5.800 4.800L1.800 8.500L5.800 12.200" fill="none" stroke="#3f9be0" stroke-width="1.700" stroke-linejoin="round" stroke-linecap="round"/></svg>
<span class="tu" style="left:897.6px;top:157px;font-size:17.4px;">Wrap Text</span>
<svg style="left:866.5px;top:199.5px;" width="24.5" height="23.5" viewBox="0 0 24.5 23.5">
<rect x="1" y="1" width="22.500" height="21.500" fill="none" stroke="#bdbdbd" stroke-width="1.500"/>
<path d="M12.200 1V5M12.200 18.500V22.500" stroke="#bdbdbd" stroke-width="1.500"/>
<rect x="1" y="5" width="22.500" height="13.500" fill="#292929" stroke="#3f9be0" stroke-width="1.700"/>
<path d="M4.500 11.700H20M7.500 8.700L4.300 11.700L7.500 14.700M17 8.700L20.200 11.700L17 14.700" fill="none" stroke="#3f9be0" stroke-width="1.600" stroke-linejoin="round" stroke-linecap="round"/>
</svg>
<span class="tu" style="left:897.6px;top:204px;font-size:17.4px;transform:scaleX(1.021);">Merge &amp; Center</span>
<svg style="left:1048.65px;top:208.65px;" width="11.1" height="7.5" viewBox="0 0 11.1 7.5"><path d="M2 2L5.55 5.5L9.1 2" fill="none" stroke="#fff" stroke-width="2" stroke-linecap="round" stroke-linejoin="round"/></svg>
<span class="tu" style="left:810.5px;top:255px;font-size:15.6px;transform:scaleX(1.031);">Alignment</span>
<svg style="left:1066px;top:257.3px;" width="12" height="12" viewBox="0 0 12 12"><path d="M1 8V1H8" fill="none" stroke="#e0e0e0" stroke-width="1.500"/><path d="M4 4L10.500 10.500M5.500 11H11V5.500" fill="none" stroke="#e0e0e0" stroke-width="1.500"/></svg>
<div style="left:1096px;top:146px;width:217.8px;height:35.6px;border:1.300px solid #6a6a6a;border-radius:7px;box-sizing:border-box;"></div>
<span class="tu" style="left:1099.5px;top:157px;font-size:17.6px;transform:scaleX(0.925);">General</span>
<svg style="left:1299.55px;top:160.8px;" width="11.3" height="7.6" viewBox="0 0 11.3 7.6"><path d="M2 2L5.65 5.6L9.3 2" fill="none" stroke="#fff" stroke-width="2" stroke-linecap="round" stroke-linejoin="round"/></svg>
<span class="tu" style="left:1106.5px;top:201px;font-size:23px;color:#d8d8d8;">$</span>
<svg style="left:1136.85px;top:208.85px;" width="11.1" height="7.5" viewBox="0 0 11.1 7.5"><path d="M2 2L5.55 5.5L9.1 2" fill="none" stroke="#fff" stroke-width="2" stroke-linecap="round" stroke-linejoin="round"/></svg>
<span class="tu" style="left:1163.4px;top:201px;font-size:25.5px;color:#d8d8d8;">%</span>
<span class="ts b" style="left:1206.8px;top:197px;font-size:52px;color:#d8d8d8;">’</span>
<div style="left:1235.1px;top:193.6px;width:1.2px;height:36.4px;background:#4b4b4b;"></div>
<span class="tu" style="left:1260.5px;top:199px;font-size:13px;color:#d8d8d8;">0</span>
<span class="tu" style="left:1248.5px;top:211px;font-size:13px;color:#d8d8d8;transform:scaleX(1.079);">.00</span>
<div style="left:1257px;top:208.6px;width:1.8px;height:1.8px;background:#d8d8d8;"></div>
<svg style="left:1244.5px;top:200.5px;" width="13" height="10" viewBox="0 0 13 10"><path d="M12 5H1.500M5 1.300L1.300 5L5 8.700" fill="none" stroke="#3f9be0" stroke-width="1.700" stroke-linejoin="round" stroke-linecap="round"/></svg>
<span class="tu" style="left:1287.5px;top:199px;font-size:13px;color:#d8d8d8;transform:scaleX(1.079);">.00</span>
<span class="tu" style="left:1295.5px;top:211px;font-size:13px;color:#d8d8d8;transform:scaleX(1.061);">.0</span>
<svg style="left:1284px;top:212.5px;" width="13" height="10" viewBox="0 0 13 10"><path d="M1 5H11.500M8 1.300L11.700 5L8 8.700" fill="none" stroke="#3f9be0" stroke-width="1.700" stroke-linejoin="round" stroke-linecap="round"/></svg>
<span class="tu" style="left:1163.6px;top:255px;font-size:15.6px;transform:scaleX(1.022);">Number</span>
<svg style="left:1307.8px;top:257.3px;" width="12" height="12" viewBox="0 0 12 12"><path d="M1 8V1H8" fill="none" stroke="#e0e0e0" stroke-width="1.500"/><path d="M4 4L10.500 10.500M5.500 11H11V5.500" fill="none" stroke="#e0e0e0" stroke-width="1.500"/></svg>
<svg style="left:1343.5px;top:144.5px;" width="51" height="35" viewBox="0 0 51 35">
<rect x="5.200" y="1.400" width="41.300" height="32.300" fill="none" stroke="#d0cecb" stroke-width="1.600"/>
<path d="M18.700 1.400V33.700M32.300 1.400V33.700M5.200 12.200H46.500M5.200 23.400H46.500" stroke="#d0cecb" stroke-width="1.500"/>
<rect x="11.800" y="11.800" width="38" height="11.800" fill="#1e7fd6" stroke="#5eaff0" stroke-width="1"/>
<path d="M22.300 11.800V23.600M35.600 11.800V23.600" stroke="#5eaff0" stroke-width="1.100"/>
<path d="M21 16.700H2M21 18.700H2M12.300 6.700L1.500 17.700L12.300 28.700" fill="none" stroke="#5aa8e6" stroke-width="1.900" stroke-linejoin="miter" stroke-linecap="butt"/>
</svg>
<span class="tu" style="left:1348px;top:196px;font-size:17.4px;transform:scaleX(0.979);">Insert</span>
<svg style="left:1362.85px;top:222.75px;" width="11.1" height="7.5" viewBox="0 0 11.1 7.5"><path d="M2 2L5.55 5.5L9.1 2" fill="none" stroke="#fff" stroke-width="2" stroke-linecap="round" stroke-linejoin="round"/></svg>
<svg style="left:1412px;top:144.5px;" width="47" height="35" viewBox="0 0 47 35">
<rect x="1.200" y="1.200" width="41.500" height="32" fill="none" stroke="#d0cecb" stroke-width="1.600"/>
<path d="M15 1.200V33.200M28.800 1.200V33.200M1.200 11.800H42.700M1.200 22.500H42.700" stroke="#d0cecb" stroke-width="1.500"/>
<rect x="0" y="11" width="30" height="12.200" fill="#292929"/>
<path d="M6.800 11.500H26L31.500 17.300L26 23.200H6.800Z" fill="#1e7fd6" stroke="#5eaff0" stroke-width="1"/>
<path d="M19.300 11.500V23.200" stroke="#5eaff0" stroke-width="1.100"/>
<path d="M27.600 9.300L45 27M45 9.300L27.600 27" stroke="#e25c5c" stroke-width="2.100" stroke-linecap="round"/>
</svg>
<span class="tu" style="left:1410px;top:196px;font-size:17.4px;transform:scaleX(0.971);">Delete</span>
<svg style="left:1427.65px;top:222.75px;" width="11.1" height="7.5" viewBox="0 0 11.1 7.5"><path d="M2 2L5.55 5.5L9.1 2" fill="none" stroke="#fff" stroke-width="2" stroke-linecap="round" stroke-linejoin="round"/></svg>
<svg style="left:1478px;top:137px;" width="44" height="42.5" viewBox="0 0 44 42.5">
<path d="M10.500 3.500H33.500M10.500 0.800V6.200M33.500 0.800V6.200" stroke="#3f9be0" stroke-width="1.500"/>
<rect x="1.200" y="9" width="41.500" height="32" fill="none" stroke="#d0cecb" stroke-width="1.600"/>
<path d="M11 9V41M33 9V41M1.200 19.600H42.700M1.200 30.300H42.700" stroke="#d0cecb" stroke-width="1.500"/>
<rect x="11" y="19.600" width="22" height="10.700" fill="#1e7fd6" stroke="#5eaff0" stroke-width="1"/>
</svg>
<span class="tu" style="left:1473px;top:194px;font-size:17.4px;transform:scaleX(1.008);">Format</span>
<svg style="left:1493.75px;top:220.85px;" width="11.1" height="7.5" viewBox="0 0 11.1 7.5"><path d="M2 2L5.55 5.5L9.1 2" fill="none" stroke="#fff" stroke-width="2" stroke-linecap="round" stroke-linejoin="round"/></svg>
<span class="tu" style="left:1418.5px;top:256px;font-size:15.6px;transform:scaleX(0.914);">Cells</span>
<svg style="left:1565.5px;top:141px;" width="19" height="22.5" viewBox="0 0 19 22.5"><path d="M17.300 4.800V1.300H1.500L10 11.200L1.500 21.200H17.300V17.700" fill="none" stroke="#d8d8d8" stroke-width="1.600" stroke-linejoin="miter"/></svg>
<span class="tu" style="left:1593.4px;top:145px;font-size:17.4px;transform:scaleX(1.020);">AutoSum</span>
<svg style="left:1693.65px;top:148.25px;" width="11.1" height="7.5" viewBox="0 0 11.1 7.5"><path d="M2 2L5.55 5.5L9.1 2" fill="none" stroke="#fff" stroke-width="2" stroke-linecap="round" stroke-linejoin="round"/></svg>
<svg style="left:1562.5px;top:180.5px;" width="25" height="22" viewBox="0 0 25 22">
<rect x="1" y="1" width="22.800" height="20" fill="none" stroke="#cfcfcf" stroke-width="1.500"/>
<path d="M1 4.600H23.800" stroke="#cfcfcf" stroke-width="1.400"/>
<path d="M12.400 7.500V17.200M8.300 13.300L12.400 17.400L16.500 13.300" fill="none" stroke="#3f9be0" stroke-width="1.700" stroke-linejoin="round" stroke-linecap="round"/>
</svg>
<span class="tu" style="left:1593.7px;top:184px;font-size:17.4px;transform:scaleX(0.900);">Fill</span>
<svg style="left:1618.85px;top:186.75px;" width="11.1" height="7.5" viewBox="0 0 11.1 7.5"><path d="M2 2L5.55 5.5L9.1 2" fill="none" stroke="#fff" stroke-width="2" stroke-linecap="round" stroke-linejoin="round"/></svg>
<svg style="left:1562.5px;top:218px;" width="25" height="24" viewBox="0 0 25 24">
<path d="M13.500 1.500L23.300 9.500L10.500 22.500L1.300 14.500Z" fill="none" stroke="#c76ad0" stroke-width="1.600" stroke-linejoin="round"/>
<path d="M6.800 9L16.300 17L10.500 22.500L1.300 14.500Z" fill="#b14fc0" stroke="#c76ad0" stroke-width="1.200" stroke-linejoin="round"/>
</svg>
<span class="tu" style="left:1593.7px;top:223px;font-size:17.4px;transform:scaleX(0.917);">Clear</span>
<svg style="left:1637.15px;top:225.85px;" width="11.1" height="7.5" viewBox="0 0 11.1 7.5"><path d="M2 2L5.55 5.5L9.1 2" fill="none" stroke="#fff" stroke-width="2" stroke-linecap="round" stroke-linejoin="round"/></svg>
<span class="tu" style="left:1729.6px;top:140px;font-size:25.5px;color:#3f9be0;">A</span>
<span class="tu" style="left:1730.2px;top:161px;font-size:24.5px;color:#d8d8d8;">Z</span>
<svg style="left:1747px;top:150.5px;" width="26" height="26" viewBox="0 0 26 26"><path d="M1.500 1.500H24.500V5L15.500 13.500V23.500H10.500V13.500L1.500 5Z" fill="none" stroke="#d0d0d0" stroke-width="1.600" stroke-linejoin="round"/></svg>
<span class="tu" style="left:1725.3px;top:193px;font-size:17.4px;transform:scaleX(1.061);">Sort &amp;</span>
<span class="tu" style="left:1724.8px;top:217px;font-size:17.4px;transform:scaleX(0.975);">Filter</span>
<svg style="left:1766.55px;top:220.85px;" width="11.1" height="7.5" viewBox="0 0 11.1 7.5"><path d="M2 2L5.55 5.5L9.1 2" fill="none" stroke="#fff" stroke-width="2" stroke-linecap="round" stroke-linejoin="round"/></svg>
<svg style="left:1797px;top:140.5px;" width="46" height="45" viewBox="0 0 46 45"><circle cx="29" cy="16.500" r="15" fill="none" stroke="#d8d8d8" stroke-width="1.700"/><path d="M18.300 27.500L1.500 43.500" stroke="#d8d8d8" stroke-width="1.900" stroke-linecap="round"/></svg>
<span class="tu" style="left:1795.4px;top:193px;font-size:17.4px;transform:scaleX(1.040);">Find &amp;</span>
<span class="tu" style="left:1790.7px;top:217px;font-size:17.4px;transform:scaleX(0.937);">Select</span>
<svg style="left:1840.85px;top:220.85px;" width="11.1" height="7.5" viewBox="0 0 11.1 7.5"><path d="M2 2L5.55 5.5L9.1 2" fill="none" stroke="#fff" stroke-width="2" stroke-linecap="round" stroke-linejoin="round"/></svg>
<span class="tu" style="left:1682.4px;top:255px;font-size:15.6px;">Editing</span>
<svg style="left:1894.5px;top:140.5px;" width="43.5" height="43" viewBox="0 0 43.5 43">
<rect x="1" y="1" width="41.500" height="41" fill="#5a2412" stroke="#d4561f" stroke-width="1.800"/>
<rect x="6" y="6" width="13" height="12.500" fill="#292929" stroke="#d4561f" stroke-width="1.600"/>
<rect x="24.500" y="6" width="13" height="12.500" fill="#292929" stroke="#d4561f" stroke-width="1.600"/>
<rect x="6" y="24" width="13" height="12.500" fill="#292929" stroke="#d4561f" stroke-width="1.600"/>
<rect x="24.500" y="24" width="13" height="12.500" fill="#292929" stroke="#d4561f" stroke-width="1.600"/>
</svg>
<span class="tu" style="left:1885.6px;top:193px;font-size:17.4px;transform:scaleX(1.046);">Add-ins</span>
<span class="tu" style="left:1888.4px;top:255px;font-size:15.6px;">Add-ins</span>
<svg style="left:1988.5px;top:140.5px;" width="44" height="44" viewBox="0 0 44 44">
<rect x="1" y="1" width="40.500" height="40.500" fill="none" stroke="#a8a8a8" stroke-width="1.600"/>
<rect x="1" y="1" width="40.500" height="5" fill="#a8a8a8"/>
<path d="M14.500 6V41.500M28 6V41.500M1 17.500H41.500M1 29.500H41.500" stroke="#8c8c8c" stroke-width="1.400"/>
<circle cx="20.500" cy="18" r="13.200" fill="#292929" stroke="#d8d8d8" stroke-width="1.700"/>
<rect x="13.500" y="16" width="4.200" height="7" fill="#9a9a9a"/>
<rect x="19" y="10.500" width="4.200" height="12.500" fill="#b8b8b8"/>
<rect x="24.500" y="13" width="4.200" height="10" fill="#1e7fd6" stroke="#5fb0f0" stroke-width="0.800"/>
<path d="M30 27.500L42.500 42" stroke="#d8d8d8" stroke-width="2.600" stroke-linecap="round"/>
</svg>
<span class="tu" style="left:1980.2px;top:193px;font-size:17.4px;transform:scaleX(0.983);">Analyze</span>
<span class="tu" style="left:1992.7px;top:217px;font-size:17.4px;transform:scaleX(0.975);">Data</span>
<div style="left:2156.500px;top:143px;width:112px;height:112px;border-radius:50%;background:#fff"></div>
<div style="left:2181.7px;top:173.2px;width:61.3px;height:52.6px;background:#5d61ea;"></div>
<div style="left:2190px;top:181.5px;width:18.3px;height:15.5px;background:#fff;"></div>
<div style="left:2190px;top:204px;width:18.3px;height:13.8px;background:#fff;"></div>
<div style="left:2216.3px;top:181.5px;width:18.7px;height:15.5px;background:#fff;"></div>
<div style="left:2216.3px;top:204px;width:18.7px;height:13.8px;background:#fff;"></div>
<span class="tu b" style="left:2295.6px;top:156px;font-size:50.2px;transform:scaleX(0.950);-webkit-text-stroke:1.300px #fff;">FINM</span>
<span class="tu b" style="left:2452.4px;top:156px;font-size:50.2px;transform:scaleX(0.840);-webkit-text-stroke:1.300px #fff;">DELSLAB</span>
<svg style="left:2410.3px;top:150px;" width="40" height="50" viewBox="0 0 40 50"><circle cx="20" cy="30.600" r="12.700" fill="none" stroke="#fff" stroke-width="8.200"/><path d="M20 4V29" stroke="#292929" stroke-width="15.500"/><path d="M20 8.800V24.500" stroke="#fff" stroke-width="8.800" stroke-linecap="round"/></svg>
<span class="tu" style="left:2295.7px;top:209px;font-size:33.6px;letter-spacing:25.47px;-webkit-text-stroke:0.500px #fff;">Templates</span>
<svg style="left:2849.51px;top:252.61px;" width="15.78" height="9.98" viewBox="0 0 15.78 9.98"><path d="M1.8 1.8L7.89 8.18L13.98 1.8" fill="none" stroke="#fff" stroke-width="1.8" stroke-linecap="round" stroke-linejoin="round"/></svg>
<div style="left:47px;top:432.8px;width:2813.3px;height:1.3px;background:#9b9b9b;"></div>
<span class="tt b" style="left:79.5px;top:304px;font-size:33.2px;color:#222327;transform:scaleX(1.014);">Returns on Invested Capital</span>
<span class="tt b" style="left:78.4px;top:344px;font-size:27px;color:#000;transform:scaleX(1.077);">ABC Company Inc.</span>
<span class="tt b" style="left:76.3px;top:382px;font-size:17.8px;color:#2a70e8;transform:scaleX(1.072);">Go to Table of Contents</span>
<div style="left:76.3px;top:399px;width:226.5px;height:1.6px;background:#2a70e8;"></div>
<div style="left:72.3px;top:433px;width:480.4px;height:30.6px;background:#4b4fd1;"></div>
<div style="left:73.1px;top:471.2px;width:479.6px;height:30.4px;background:#4bb2e8;"></div>
<span class="tt b" style="left:211.6px;top:439px;font-size:23.6px;">Years to payback</span>
<span class="tt b" style="left:294.6px;top:476px;font-size:23.4px;transform:scaleX(0.976);">4.3</span>
<div style="left:708px;top:433px;width:469px;height:30.6px;background:#4b4fd1;"></div>
<div style="left:708.8px;top:471.2px;width:468.2px;height:30.4px;background:#4bb2e8;"></div>
<span class="tt b" style="left:754.9px;top:439px;font-size:23.6px;transform:scaleX(1.016);">5-Year Cash Generated ($'000)</span>
<span class="tt b" style="left:915.65px;top:476px;font-size:23.4px;transform:scaleX(1.008);">302</span>
<div style="left:1332px;top:433px;width:468.6px;height:30.6px;background:#4b4fd1;"></div>
<div style="left:1332.8px;top:471.2px;width:467.8px;height:30.4px;background:#4bb2e8;"></div>
<span class="tt b" style="left:1494px;top:439px;font-size:23.6px;transform:scaleX(1.036);">ROIC - 2030</span>
<span class="tt b" style="left:1526.7px;top:476px;font-size:23.4px;transform:scaleX(1.101);">18.8%</span>
<div style="left:72.2px;top:527.2px;width:1728.6px;height:36.8px;background:#4b4fd1;"></div>
<span class="tt b" style="left:625.95px;top:533px;font-size:28.8px;transform:scaleX(1.005);">Returns on Invested Capital Chart ($'000)</span>
<div style="left:72.2px;top:1118px;width:1728.6px;height:36.5px;background:#4b4fd1;"></div>
<span class="tt b" style="left:669.95px;top:1124px;font-size:28.8px;transform:scaleX(1.008);">Returns on Invested Capital ($'000)</span>
<div style="left:72.2px;top:1406.8px;width:1728.6px;height:36.9px;background:#4b4fd1;"></div>
<span class="tt b" style="left:698.45px;top:1412px;font-size:28.8px;">Payback Period Analysis ($'000)</span>
<svg style="left:0px;top:0px;pointer-events:none;" width="2902" height="1762" viewBox="0 0 2902 1762"><path d="M211.4 664.5H1800" stroke="#6c9fbf" stroke-width="1"/><path d="M211.4 708.5H1800" stroke="#6c9fbf" stroke-width="1"/><path d="M211.4 752.5H1800" stroke="#6c9fbf" stroke-width="1"/><path d="M211.4 796.5H1800" stroke="#6c9fbf" stroke-width="1"/><path d="M211.4 840.5H1800" stroke="#6c9fbf" stroke-width="1"/><path d="M211.4 884.5H1800" stroke="#6c9fbf" stroke-width="1"/><path d="M211.4 928.5H1800" stroke="#6c9fbf" stroke-width="1"/><path d="M211.4 1017.5H1800" stroke="#6c9fbf" stroke-width="1"/><rect x="249" y="683.89" width="121.600" height="289.11" fill="#4bb2e8"/><rect x="370.6" y="973" width="122.500" height="2.98" fill="#f07b70"/><rect x="566.5" y="710.99" width="121.600" height="262.01" fill="#4bb2e8"/><rect x="688.1" y="969.25" width="122.500" height="3.75" fill="#f07b70"/><rect x="884" y="729.06" width="121.600" height="243.94" fill="#4bb2e8"/><rect x="1005.6" y="961.54" width="122.500" height="11.46" fill="#f07b70"/><rect x="1201.5" y="729.06" width="121.600" height="243.94" fill="#4bb2e8"/><rect x="1323.1" y="943.91" width="122.500" height="29.09" fill="#f07b70"/><rect x="1519" y="710.11" width="121.600" height="262.89" fill="#4bb2e8"/><rect x="1640.6" y="925.4" width="122.500" height="47.6" fill="#f07b70"/><path d="M211.4 973H1800" stroke="#4aa2d8" stroke-width="2"/><path d="M211.4 973v6.500" stroke="#4aa7dc" stroke-width="1.600"/><path d="M529.1 973v6.500" stroke="#4aa7dc" stroke-width="1.600"/><path d="M846.8 973v6.500" stroke="#4aa7dc" stroke-width="1.600"/><path d="M1164.5 973v6.500" stroke="#4aa7dc" stroke-width="1.600"/><path d="M1482.2 973v6.500" stroke="#4aa7dc" stroke-width="1.600"/><path d="M1799.3 973v6.500" stroke="#4aa7dc" stroke-width="1.600"/><path d="M369.6 955.6L687.3 925.97L1005 882.23L1322.7 777.81L1640.4 680.46" fill="none" stroke="#2db5a3" stroke-width="3.800" stroke-linejoin="round"/><circle cx="369.6" cy="955.6" r="39.300" fill="#2db5a3"/><circle cx="687.3" cy="925.97" r="39.300" fill="#2db5a3"/><circle cx="1005" cy="882.23" r="39.300" fill="#2db5a3"/><circle cx="1322.7" cy="777.81" r="39.300" fill="#2db5a3"/><circle cx="1640.4" cy="680.46" r="39.300" fill="#2db5a3"/><rect x="278" y="596.400" width="46" height="12.600" fill="#4bb2e8"/><rect x="774.800" y="596.400" width="46" height="12.600" fill="#f07b70"/><path d="M1479.500 602.700H1528" stroke="#2db5a3" stroke-width="3.200"/><circle cx="1503" cy="602.700" r="6.800" fill="#2db5a3"/></svg>
<span class="tt b" style="left:329.4px;top:590px;font-size:24px;color:#000;">Total Invested Capital</span>
<span class="tt b" style="left:826.7px;top:590px;font-size:24px;color:#000;transform:scaleX(1.005);">Net Operating Profit After Tax (NOPAT)</span>
<span class="tt b" style="left:1532px;top:590px;font-size:24px;color:#000;transform:scaleX(1.070);">ROIC</span>
<span class="tt b" style="left:134.8px;top:655px;font-size:19.2px;color:#000;transform:scaleX(0.963);">1,400</span>
<span class="tt b" style="left:134.8px;top:699px;font-size:19.2px;color:#000;transform:scaleX(0.963);">1,200</span>
<span class="tt b" style="left:134.8px;top:743px;font-size:19.2px;color:#000;transform:scaleX(0.963);">1,000</span>
<span class="tt b" style="left:151.2px;top:787px;font-size:19.2px;color:#000;transform:scaleX(1.004);">800</span>
<span class="tt b" style="left:151.2px;top:831px;font-size:19.2px;color:#000;transform:scaleX(1.004);">600</span>
<span class="tt b" style="left:151.2px;top:875px;font-size:19.2px;color:#000;transform:scaleX(1.004);">400</span>
<span class="tt b" style="left:151.2px;top:920px;font-size:19.2px;color:#000;transform:scaleX(1.004);">200</span>
<span class="tt b" style="left:180.23px;top:964px;font-size:19.2px;color:#000;">-</span>
<span class="tt b" style="left:139.8px;top:1008px;font-size:19.2px;color:#000;transform:scaleX(1.023);">(200)</span>
<span class="tt b" style="left:343.6px;top:1072px;font-size:21.4px;color:#000;transform:scaleX(1.016);">2026</span>
<span class="tt b" style="left:661.3px;top:1072px;font-size:21.4px;color:#000;transform:scaleX(1.016);">2027</span>
<span class="tt b" style="left:979px;top:1072px;font-size:21.4px;color:#000;transform:scaleX(1.016);">2028</span>
<span class="tt b" style="left:1296.7px;top:1072px;font-size:21.4px;color:#000;transform:scaleX(1.016);">2029</span>
<span class="tt b" style="left:1614.4px;top:1072px;font-size:21.4px;color:#000;transform:scaleX(1.016);">2030</span>
<span class="tt b" style="left:340.95px;top:949px;font-size:18.4px;transform:scaleX(1.131);">-0.7%</span>
<span class="tt b" style="left:662.5px;top:920px;font-size:18.4px;transform:scaleX(1.133);">1.4%</span>
<span class="tt b" style="left:980.2px;top:876px;font-size:18.4px;transform:scaleX(1.133);">4.5%</span>
<span class="tt b" style="left:1291.65px;top:771px;font-size:18.4px;transform:scaleX(1.124);">11.9%</span>
<span class="tt b" style="left:1609.35px;top:674px;font-size:18.4px;transform:scaleX(1.124);">18.8%</span>
<div style="left:73px;top:1160px;width:1727.2px;height:34.6px;background:#6e75e9;"></div>
<div style="left:1019.5px;top:1160px;width:1.1px;height:34.6px;background:#fff;"></div>
<div style="left:1175.5px;top:1160px;width:1.1px;height:34.6px;background:#fff;"></div>
<div style="left:1331.5px;top:1160px;width:1.1px;height:34.6px;background:#fff;"></div>
<div style="left:1487.5px;top:1160px;width:1.1px;height:34.6px;background:#fff;"></div>
<div style="left:1643.5px;top:1160px;width:1.1px;height:34.6px;background:#fff;"></div>
<span class="tt b" style="left:85.7px;top:1169px;font-size:19.3px;transform:scaleX(0.975);">Fiscal Year</span>
<span class="tt b" style="left:1075.85px;top:1169px;font-size:19px;transform:scaleX(0.982);">2026</span>
<span class="tt b" style="left:1231.85px;top:1169px;font-size:19px;transform:scaleX(0.982);">2027</span>
<span class="tt b" style="left:1387.85px;top:1169px;font-size:19px;transform:scaleX(0.982);">2028</span>
<span class="tt b" style="left:1543.85px;top:1169px;font-size:19px;transform:scaleX(0.982);">2029</span>
<span class="tt b" style="left:1699.85px;top:1169px;font-size:19px;transform:scaleX(0.982);">2030</span>
<span class="tt" style="left:94.9px;top:1210px;font-size:18.2px;color:#000;transform:scaleX(0.977);">Debts</span>
<span class="tt" style="left:1137.42px;top:1210px;font-size:18px;color:#000;transform:scaleX(0.944);">667</span>
<span class="tt" style="left:1293.42px;top:1210px;font-size:18px;color:#000;transform:scaleX(0.944);">562</span>
<span class="tt" style="left:1449.42px;top:1210px;font-size:18px;color:#000;transform:scaleX(0.944);">453</span>
<span class="tt" style="left:1605.42px;top:1210px;font-size:18px;color:#000;transform:scaleX(0.944);">340</span>
<span class="tt" style="left:1761.42px;top:1210px;font-size:18px;color:#000;transform:scaleX(0.944);">222</span>
<span class="tt" style="left:94.9px;top:1245px;font-size:18.2px;color:#000;transform:scaleX(0.972);">Equity</span>
<span class="tt" style="left:1137.42px;top:1245px;font-size:18px;color:#000;transform:scaleX(0.944);">645</span>
<span class="tt" style="left:1293.42px;top:1245px;font-size:18px;color:#000;transform:scaleX(0.944);">628</span>
<span class="tt" style="left:1449.42px;top:1245px;font-size:18px;color:#000;transform:scaleX(0.944);">655</span>
<span class="tt" style="left:1605.42px;top:1245px;font-size:18px;color:#000;transform:scaleX(0.944);">767</span>
<span class="tt" style="left:1761.42px;top:1245px;font-size:18px;color:#000;transform:scaleX(0.944);">970</span>
<div style="left:72.2px;top:1270px;width:1728.6px;height:36.2px;background:#4bb2e8;"></div>
<span class="tt b" style="left:77px;top:1278px;font-size:22.1px;">Total Invested Capital</span>
<span class="tt b" style="left:1111.17px;top:1281px;font-size:19.2px;transform:scaleX(0.978);">1,312</span>
<span class="tt b" style="left:1267.17px;top:1281px;font-size:19.2px;transform:scaleX(0.978);">1,189</span>
<span class="tt b" style="left:1423.17px;top:1281px;font-size:19.2px;transform:scaleX(0.978);">1,107</span>
<span class="tt b" style="left:1579.17px;top:1281px;font-size:19.2px;transform:scaleX(0.978);">1,107</span>
<span class="tt b" style="left:1735.17px;top:1281px;font-size:19.2px;transform:scaleX(0.978);">1,193</span>
<span class="tt" style="left:94.9px;top:1316px;font-size:18.2px;color:#000;transform:scaleX(1.047);">Net Operating Profit After Tax (NOPAT)</span>
<span class="tt" style="left:1150.68px;top:1316px;font-size:18px;color:#000;transform:scaleX(0.964);">(9)</span>
<span class="tt" style="left:1303.24px;top:1316px;font-size:18px;color:#000;transform:scaleX(0.939);">17</span>
<span class="tt" style="left:1459.24px;top:1316px;font-size:18px;color:#000;transform:scaleX(0.939);">52</span>
<span class="tt" style="left:1605.42px;top:1316px;font-size:18px;color:#000;transform:scaleX(0.944);">132</span>
<span class="tt" style="left:1761.42px;top:1316px;font-size:18px;color:#000;transform:scaleX(0.944);">216</span>
<div style="left:72.2px;top:1341px;width:1728.6px;height:36.8px;background:#4bb2e8;"></div>
<span class="tt b" style="left:77px;top:1349px;font-size:22.1px;transform:scaleX(1.089);">ROIC</span>
<span class="tt b" style="left:1112.25px;top:1352px;font-size:19.2px;transform:scaleX(1.096);">-0.7%</span>
<span class="tt b" style="left:1276.51px;top:1352px;font-size:19.2px;transform:scaleX(1.088);">1.4%</span>
<span class="tt b" style="left:1432.51px;top:1352px;font-size:19.2px;transform:scaleX(1.088);">4.5%</span>
<span class="tt b" style="left:1576.28px;top:1352px;font-size:19.2px;transform:scaleX(1.074);">11.9%</span>
<span class="tt b" style="left:1732.28px;top:1352px;font-size:19.2px;transform:scaleX(1.074);">18.8%</span>
<div style="left:73px;top:1449.2px;width:1727.2px;height:34.8px;background:#6e75e9;"></div>
<div style="left:1019.5px;top:1449.2px;width:1.1px;height:34.8px;background:#fff;"></div>
<div style="left:1175.5px;top:1449.2px;width:1.1px;height:34.8px;background:#fff;"></div>
<div style="left:1331.5px;top:1449.2px;width:1.1px;height:34.8px;background:#fff;"></div>
<div style="left:1487.5px;top:1449.2px;width:1.1px;height:34.8px;background:#fff;"></div>
<div style="left:1643.5px;top:1449.2px;width:1.1px;height:34.8px;background:#fff;"></div>
<span class="tt b" style="left:85.7px;top:1458px;font-size:19.3px;transform:scaleX(0.975);">Fiscal Year</span>
<span class="tt b" style="left:1075.85px;top:1458px;font-size:19px;transform:scaleX(0.982);">2026</span>
<span class="tt b" style="left:1231.85px;top:1458px;font-size:19px;transform:scaleX(0.982);">2027</span>
<span class="tt b" style="left:1387.85px;top:1458px;font-size:19px;transform:scaleX(0.982);">2028</span>
<span class="tt b" style="left:1543.85px;top:1458px;font-size:19px;transform:scaleX(0.982);">2029</span>
<span class="tt b" style="left:1699.85px;top:1458px;font-size:19px;transform:scaleX(0.982);">2030</span>
<span class="tt" style="left:94.9px;top:1499px;font-size:18.2px;color:#000;transform:scaleX(1.038);">Net Profit After Tax</span>
<span class="tt" style="left:1150.68px;top:1499px;font-size:18px;color:#000;transform:scaleX(0.964);">(9)</span>
<span class="tt" style="left:1303.24px;top:1499px;font-size:18px;color:#000;transform:scaleX(0.939);">17</span>
<span class="tt" style="left:1459.24px;top:1499px;font-size:18px;color:#000;transform:scaleX(0.939);">52</span>
<span class="tt" style="left:1605.42px;top:1499px;font-size:18px;color:#000;transform:scaleX(0.944);">132</span>
<span class="tt" style="left:1761.42px;top:1499px;font-size:18px;color:#000;transform:scaleX(0.944);">216</span>
<span class="tt" style="left:94.9px;top:1534px;font-size:18.2px;color:#000;transform:scaleX(0.977);">CAPEX</span>
<span class="tt" style="left:1131.03px;top:1534px;font-size:18px;color:#000;transform:scaleX(0.959);">(105)</span>
<span class="tt" style="left:1315.64px;top:1534px;font-size:18px;color:#000;">-</span>
<span class="tt" style="left:1471.64px;top:1534px;font-size:18px;color:#000;">-</span>
<span class="tt" style="left:1627.64px;top:1534px;font-size:18px;color:#000;">-</span>
<span class="tt" style="left:1783.64px;top:1534px;font-size:18px;color:#000;">-</span>
<div style="left:72.2px;top:1559px;width:1728.6px;height:35.8px;background:#4bb2e8;"></div>
<span class="tt b" style="left:77px;top:1566px;font-size:22.1px;transform:scaleX(0.982);">Cumulative Cash Generated (Spent)</span>
<span class="tt b" style="left:1120.52px;top:1569px;font-size:19.2px;transform:scaleX(1.009);">(114)</span>
<span class="tt b" style="left:1288.75px;top:1569px;font-size:19.2px;transform:scaleX(1.006);">(97)</span>
<span class="tt b" style="left:1444.75px;top:1569px;font-size:19.2px;transform:scaleX(1.006);">(46)</span>
<span class="tt b" style="left:1609.64px;top:1569px;font-size:19.2px;transform:scaleX(0.955);">86</span>
<span class="tt b" style="left:1753.41px;top:1569px;font-size:19.2px;transform:scaleX(0.976);">302</span>
<div style="left:1487.8px;top:1596px;width:157px;height:28.7px;background:#2db5a3;"></div>
<span class="tt b" style="left:76.3px;top:1601px;font-size:19.6px;color:#1a1a1a;transform:scaleX(0.944);">Payback year</span>
<span class="tt b" style="left:1095.14px;top:1601px;font-size:19.6px;color:#1a1a1a;">-</span>
<span class="tt b" style="left:1251.14px;top:1601px;font-size:19.6px;color:#1a1a1a;">-</span>
<span class="tt b" style="left:1407.14px;top:1601px;font-size:19.6px;color:#1a1a1a;">-</span>
<span class="tt b" style="left:1560.67px;top:1601px;font-size:19.6px;color:#1a1a1a;">1</span>
<span class="tt b" style="left:1719.14px;top:1601px;font-size:19.6px;color:#1a1a1a;">-</span>
<svg style="left:45px;top:1685.5px;" width="12" height="16" viewBox="0 0 12 16"><path d="M9.800 1.200L1.800 7.800L9.800 14.600" fill="none" stroke="#8f8f8f" stroke-width="1.700" stroke-linecap="round" stroke-linejoin="round"/></svg>
<svg style="left:94px;top:1685.5px;" width="12" height="16" viewBox="0 0 12 16"><path d="M1.800 1.200L9.800 7.800L1.800 14.600" fill="none" stroke="#e6e6e6" stroke-width="1.700" stroke-linecap="round" stroke-linejoin="round"/></svg>
<span class="tu" style="left:190.6px;top:1686px;font-size:20.5px;transform:scaleX(0.994);">Contents</span>
<div style="left:299px;top:1676px;width:128px;height:35.8px;background:#ffef6b;border-radius:7px;"></div>
<span class="tu" style="left:314px;top:1686px;font-size:20.5px;color:#151515;transform:scaleX(0.989);">Dashboard</span>
<div style="left:440.2px;top:1676px;width:105.4px;height:35.8px;background:#ffef6b;border-radius:7px;"></div>
<span class="tu" style="left:454.8px;top:1686px;font-size:20.5px;color:#151515;transform:scaleX(0.947);">Revenue</span>
<div style="left:559px;top:1676px;width:78.9px;height:35.8px;background:#ffef6b;border-radius:7px;"></div>
<span class="tu" style="left:571.7px;top:1686px;font-size:20.5px;color:#151515;transform:scaleX(0.878);">COGS</span>
<div style="left:650.8px;top:1676px;width:76px;height:35.8px;background:#ffef6b;border-radius:7px;"></div>
<span class="tu" style="left:664.2px;top:1686px;font-size:20.5px;color:#151515;transform:scaleX(0.874);">OPEX</span>
<div style="left:740.1px;top:1676px;width:88.7px;height:35.8px;background:#ffef6b;border-radius:7px;"></div>
<span class="tu" style="left:753.5px;top:1686px;font-size:20.5px;color:#151515;transform:scaleX(0.977);">Payroll</span>
<div style="left:842px;top:1676px;width:86.9px;height:35.8px;background:#ffef6b;border-radius:7px;"></div>
<span class="tu" style="left:855.3px;top:1686px;font-size:20.5px;color:#151515;transform:scaleX(0.869);">CAPEX</span>
<div style="left:942.2px;top:1676px;width:112.3px;height:35.8px;background:#ffef6b;border-radius:7px;"></div>
<span class="tu" style="left:955px;top:1686px;font-size:20.5px;color:#151515;transform:scaleX(0.986);">CapTable</span>
<div style="left:1067.6px;top:1676px;width:90.4px;height:35.8px;background:#ffef6b;border-radius:7px;"></div>
<span class="tu" style="left:1080.6px;top:1686px;font-size:20.5px;color:#151515;transform:scaleX(1.005);">Capital</span>
<div style="left:1170.7px;top:1676px;width:42.3px;height:35.8px;background:#4bb2e8;border-radius:7px;"></div>
<span class="tu" style="left:1184px;top:1686px;font-size:20.5px;color:#151515;transform:scaleX(0.826);">IS</span>
<div style="left:1226px;top:1676px;width:47.8px;height:35.8px;background:#4bb2e8;border-radius:7px;"></div>
<span class="tu" style="left:1239px;top:1686px;font-size:20.5px;color:#151515;transform:scaleX(0.805);">CF</span>
<div style="left:1286.8px;top:1676px;width:47.9px;height:35.8px;background:#4bb2e8;border-radius:7px;"></div>
<span class="tu" style="left:1300.6px;top:1686px;font-size:20.5px;color:#151515;transform:scaleX(0.782);">BS</span>
<div style="left:1347.6px;top:1676px;width:115.4px;height:35.8px;background:#4bb2e8;border-radius:7px;"></div>
<span class="tu" style="left:1361.4px;top:1686px;font-size:20.5px;color:#151515;transform:scaleX(0.958);">Scenarios</span>
<div style="left:1475.5px;top:1676px;width:115.2px;height:35.8px;background:#4bb2e8;border-radius:7px;"></div>
<span class="tu" style="left:1489.7px;top:1686px;font-size:20.5px;color:#151515;transform:scaleX(1.034);">Valuation</span>
<div style="left:1604px;top:1676px;width:114.2px;height:35.8px;background:#4bb2e8;border-radius:7px;"></div>
<span class="tu" style="left:1618.3px;top:1686px;font-size:20.5px;color:#151515;transform:scaleX(0.986);">Summary</span>
<div style="left:1731px;top:1676px;width:48px;height:35.8px;background:#4bb2e8;border-radius:7px;"></div>
<span class="tu" style="left:1745px;top:1686px;font-size:20.5px;color:#151515;transform:scaleX(0.786);">BE</span>
<div style="left:1877px;top:1676px;width:84.8px;height:35.8px;background:#4bb2e8;border-radius:7px;"></div>
<span class="tu" style="left:1890px;top:1686px;font-size:20.5px;color:#151515;transform:scaleX(0.972);">Charts</span>
<div style="left:1974.9px;top:1676px;width:64.1px;height:35.8px;background:#4bb2e8;border-radius:7px;"></div>
<span class="tu" style="left:1988.4px;top:1686px;font-size:20.5px;color:#151515;transform:scaleX(0.864);">KPIs</span>
<div style="left:2052.2px;top:1676px;width:19.8px;height:35.8px;background:#4bb2e8;border-radius:7px 0 0 7px;"></div>
<span class="tu" style="left:2063.4px;top:1686px;font-size:20.5px;color:#151515;width:8.300px;overflow:hidden;">S</span>
<div style="left:292.5px;top:1681px;width:1.2px;height:26.5px;background:#525252;"></div>
<div style="left:433.5px;top:1681px;width:1.2px;height:26.5px;background:#525252;"></div>
<div style="left:551.5px;top:1681px;width:1.2px;height:26.5px;background:#525252;"></div>
<div style="left:643.5px;top:1681px;width:1.2px;height:26.5px;background:#525252;"></div>
<div style="left:733.5px;top:1681px;width:1.2px;height:26.5px;background:#525252;"></div>
<div style="left:834.5px;top:1681px;width:1.2px;height:26.5px;background:#525252;"></div>
<div style="left:935.5px;top:1681px;width:1.2px;height:26.5px;background:#525252;"></div>
<div style="left:1060.5px;top:1681px;width:1.2px;height:26.5px;background:#525252;"></div>
<div style="left:1164.5px;top:1681px;width:1.2px;height:26.5px;background:#525252;"></div>
<div style="left:1218.5px;top:1681px;width:1.2px;height:26.5px;background:#525252;"></div>
<div style="left:1279.5px;top:1681px;width:1.2px;height:26.5px;background:#525252;"></div>
<div style="left:1340.5px;top:1681px;width:1.2px;height:26.5px;background:#525252;"></div>
<div style="left:1468.5px;top:1681px;width:1.2px;height:26.5px;background:#525252;"></div>
<div style="left:1596.5px;top:1681px;width:1.2px;height:26.5px;background:#525252;"></div>
<div style="left:1724.5px;top:1681px;width:1.2px;height:26.5px;background:#525252;"></div>
<div style="left:1785.5px;top:1681px;width:1.2px;height:26.5px;background:#525252;"></div>
<div style="left:1869.5px;top:1681px;width:1.2px;height:26.5px;background:#525252;"></div>
<div style="left:1967.5px;top:1681px;width:1.2px;height:26.5px;background:#525252;"></div>
<div style="left:2045.5px;top:1681px;width:1.2px;height:26.5px;background:#525252;"></div>
<div style="left:1787.7px;top:1670px;width:80.7px;height:5px;background:#fff;"></div>
<div style="left:1781.7px;top:1670.2px;width:10px;height:10px;background:#0a0a0a;border-top-right-radius:4.500px;"></div>
<div style="left:1864.4px;top:1670.2px;width:10px;height:10px;background:#0a0a0a;border-top-left-radius:4.500px;"></div>
<div style="left:1791.7px;top:1670px;width:72.7px;height:41.8px;background:linear-gradient(#ffffff 0,#f1f8fd 28%,#cde5f7 100%);border-radius:0 0 7px 7px;"></div>
<span class="tu" style="left:1805.2px;top:1681px;font-size:20.5px;color:#1c1c1c;transform:scaleX(0.909);">ROIC</span>
<div style="left:1804px;top:1705px;width:48px;height:2.8px;background:#1e8a4c;"></div>
<div style="left:2087.1px;top:1691.2px;width:3.4px;height:3.4px;background:#e6e6e6;border-radius:50%;"></div>
<div style="left:2093.6px;top:1691.2px;width:3.4px;height:3.4px;background:#e6e6e6;border-radius:50%;"></div>
<div style="left:2100.1px;top:1691.2px;width:3.4px;height:3.4px;background:#e6e6e6;border-radius:50%;"></div>
<div style="left:2134.8px;top:1692px;width:16.4px;height:1.6px;background:#e6e6e6;"></div>
<div style="left:2142.2px;top:1684.6px;width:1.6px;height:16.4px;background:#e6e6e6;"></div>
<div style="left:2190px;top:1687px;width:3.5px;height:3px;background:#efefef;border-radius:0.800px;"></div>
<div style="left:2190px;top:1693px;width:3.5px;height:3px;background:#efefef;border-radius:0.800px;"></div>
<div style="left:2190px;top:1699px;width:3.5px;height:3px;background:#efefef;border-radius:0.800px;"></div>
<div style="left:2216px;top:1680px;width:644px;height:26.5px;background:#161616;border-radius:13px;"></div>
<svg style="left:2223px;top:1687px;" width="11" height="13" viewBox="0 0 11 13"><path d="M9 2L2 6.500L9 11Z" fill="#9a9a9a" stroke="#9a9a9a" stroke-width="2" stroke-linejoin="round"/></svg>
<div style="left:2242px;top:1687px;width:552px;height:12px;background:#9c9c9c;border-radius:6px;"></div>
<svg style="left:2841.6px;top:1687px;" width="11" height="13" viewBox="0 0 11 13"><path d="M2 2L9 6.500L2 11Z" fill="#9a9a9a" stroke="#9a9a9a" stroke-width="2" stroke-linejoin="round"/></svg>
<div style="left:11px;top:1718.4px;width:2880px;height:32.4px;background:#161616;"></div>
<div style="left:11px;top:1717.8px;width:2880px;height:1px;background:#303030;"></div>
<span class="tu" style="left:27.5px;top:1727px;font-size:15.2px;transform:scaleX(0.954);">Ready</span>
<svg style="left:99px;top:1725.5px;" width="23" height="20" viewBox="0 0 23 20">
<path d="M1 17V1.200H21V7" fill="none" stroke="#e8e8e8" stroke-width="1.500"/>
<path d="M1 4.800H21" stroke="#e8e8e8" stroke-width="1.300"/>
<path d="M4 9H9.500M4 12.500H8M4 16H8" stroke="#e8e8e8" stroke-width="1.400"/>
<circle cx="15.500" cy="13.200" r="5.600" fill="none" stroke="#e8e8e8" stroke-width="1.500"/>
<circle cx="15.500" cy="13.200" r="2.600" fill="#e8e8e8"/>
</svg>
<svg style="left:146px;top:1724.5px;" width="23" height="22" viewBox="0 0 23 22">
<circle cx="9.500" cy="2.800" r="2.200" fill="none" stroke="#e8e8e8" stroke-width="1.400"/>
<path d="M1.500 5.500L6.500 8H12.500L17.500 5.500M6.500 8V13L3.500 20.500M12.500 8V12M9.500 13.500L11 16" fill="none" stroke="#e8e8e8" stroke-width="1.500" stroke-linecap="round" stroke-linejoin="round"/>
<path d="M12.500 13.500L20.500 21M20.500 13.500L12.500 21" stroke="#e8e8e8" stroke-width="1.500" stroke-linecap="round"/>
</svg>
<span class="tu b" style="left:173.4px;top:1727px;font-size:15.2px;transform:scaleX(1.033);">Accessibility: Investigate</span>
<div style="left:2445px;top:1718.6px;width:60px;height:32.2px;background:#242424;"></div>
<svg style="left:2463.7px;top:1723.8px;" width="21" height="20.5" viewBox="0 0 21 20.5"><rect x="1.200" y="1.200" width="18.600" height="18" fill="none" stroke="#fff" stroke-width="1.900"/><path d="M7.400 1V19.500M13.600 1V19.500M1 7.200H20M1 13.200H20" stroke="#fff" stroke-width="1.800"/></svg>
<svg style="left:2524.2px;top:1723.8px;" width="22" height="20.5" viewBox="0 0 22 20.5"><rect x="1.200" y="1.200" width="19.600" height="18" fill="none" stroke="#fff" stroke-width="1.900"/><rect x="5.700" y="5.500" width="10.600" height="9.400" fill="none" stroke="#fff" stroke-width="1.600"/><path d="M8 8.700H14M8 11.700H14" stroke="#fff" stroke-width="1.300"/></svg>
<svg style="left:2584px;top:1723.8px;" width="22" height="20.5" viewBox="0 0 22 20.5"><rect x="1.200" y="1.200" width="19.600" height="18" fill="none" stroke="#fff" stroke-width="1.900"/><path d="M1 12.300H13.800V1M7.500 1V12.300" fill="none" stroke="#fff" stroke-width="1.800"/></svg>
<div style="left:2632.7px;top:1734.4px;width:11.3px;height:1.2px;background:#d0d0d0;"></div>
<div style="left:2653px;top:1734.4px;width:147.5px;height:1.2px;background:#cfcfcf;"></div>
<div style="left:2727px;top:1725.5px;width:8.5px;height:18.5px;background:#b9b9b9;border-radius:1.500px;"></div>
<div style="left:2809px;top:1734.3px;width:11.6px;height:1.4px;background:#d8d8d8;"></div>
<div style="left:2814.1px;top:1729.2px;width:1.4px;height:11.6px;background:#d8d8d8;"></div>
<span class="tu" style="left:2840.7px;top:1728px;font-size:15.2px;transform:scaleX(0.986);">120%</span>
</body></html>
